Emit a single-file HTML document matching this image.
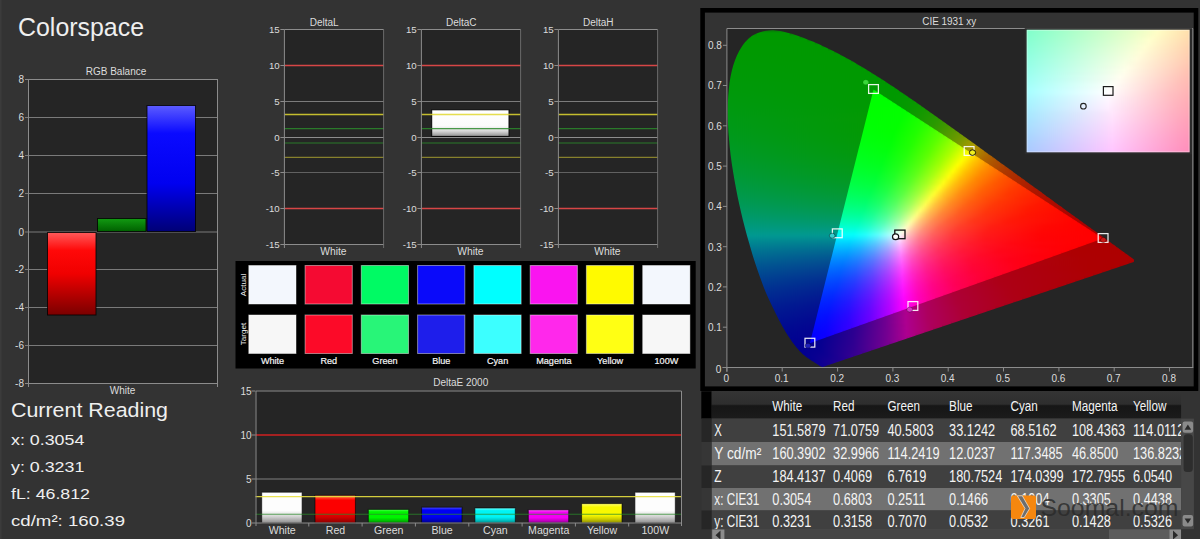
<!DOCTYPE html>
<html><head><meta charset="utf-8"><title>Colorspace</title>
<style>html,body{margin:0;padding:0;background:#333;overflow:hidden}svg{display:block;font-family:"Liberation Sans",sans-serif}</style>
</head><body>
<svg width="1200" height="539" viewBox="0 0 1200 539">
<defs><linearGradient id="g1" x1="0" y1="0" x2="0" y2="1"><stop offset="0" stop-color="#ff5a5a"/><stop offset="0.22" stop-color="#ff0808"/><stop offset="0.5" stop-color="#f00000"/><stop offset="1" stop-color="#7a0000"/></linearGradient><linearGradient id="g2" x1="0" y1="0" x2="0" y2="1"><stop offset="0" stop-color="#129a12"/><stop offset="1" stop-color="#006000"/></linearGradient><linearGradient id="g3" x1="0" y1="0" x2="0" y2="1"><stop offset="0" stop-color="#5c5cff"/><stop offset="0.22" stop-color="#0a0aff"/><stop offset="0.62" stop-color="#0000f0"/><stop offset="1" stop-color="#000076"/></linearGradient><linearGradient id="g4" x1="0" y1="0" x2="0" y2="1"><stop offset="0" stop-color="#ffffff"/><stop offset="0.6" stop-color="#fbfbfb"/><stop offset="0.8" stop-color="#d8d8d8"/><stop offset="1" stop-color="#909090"/></linearGradient><linearGradient id="g5" x1="0" y1="0" x2="0" y2="1"><stop offset="0" stop-color="#ffffff"/><stop offset="0.18" stop-color="#fdfdfd"/><stop offset="0.6" stop-color="#fdfdfd"/><stop offset="0.8" stop-color="#d0d0d0"/><stop offset="1" stop-color="#8c8c8c"/></linearGradient><linearGradient id="g6" x1="0" y1="0" x2="0" y2="1"><stop offset="0" stop-color="#ff7a4a"/><stop offset="0.18" stop-color="#fc0000"/><stop offset="0.6" stop-color="#fc0000"/><stop offset="0.8" stop-color="#d00000"/><stop offset="1" stop-color="#8a0000"/></linearGradient><linearGradient id="g7" x1="0" y1="0" x2="0" y2="1"><stop offset="0" stop-color="#50ff50"/><stop offset="0.18" stop-color="#00f400"/><stop offset="0.6" stop-color="#00f400"/><stop offset="0.8" stop-color="#00c800"/><stop offset="1" stop-color="#008400"/></linearGradient><linearGradient id="g8" x1="0" y1="0" x2="0" y2="1"><stop offset="0" stop-color="#5050ff"/><stop offset="0.18" stop-color="#0000f4"/><stop offset="0.6" stop-color="#0000f4"/><stop offset="0.8" stop-color="#0000c8"/><stop offset="1" stop-color="#000088"/></linearGradient><linearGradient id="g9" x1="0" y1="0" x2="0" y2="1"><stop offset="0" stop-color="#70ffff"/><stop offset="0.18" stop-color="#00f4f4"/><stop offset="0.6" stop-color="#00f4f4"/><stop offset="0.8" stop-color="#00c8c8"/><stop offset="1" stop-color="#008888"/></linearGradient><linearGradient id="g10" x1="0" y1="0" x2="0" y2="1"><stop offset="0" stop-color="#ff70ff"/><stop offset="0.18" stop-color="#f400f4"/><stop offset="0.6" stop-color="#f400f4"/><stop offset="0.8" stop-color="#c800c8"/><stop offset="1" stop-color="#880088"/></linearGradient><linearGradient id="g11" x1="0" y1="0" x2="0" y2="1"><stop offset="0" stop-color="#ffff70"/><stop offset="0.18" stop-color="#f8f800"/><stop offset="0.6" stop-color="#f8f800"/><stop offset="0.8" stop-color="#cccc00"/><stop offset="1" stop-color="#8a8a00"/></linearGradient><linearGradient id="g12" x1="0" y1="0" x2="0" y2="1"><stop offset="0" stop-color="#ffffff"/><stop offset="0.18" stop-color="#fdfdfd"/><stop offset="0.6" stop-color="#fdfdfd"/><stop offset="0.8" stop-color="#d0d0d0"/><stop offset="1" stop-color="#8c8c8c"/></linearGradient><filter id="vb" x="-2%" y="-2%" width="104%" height="104%" color-interpolation-filters="sRGB"><feGaussianBlur stdDeviation="0 1.5"/></filter><clipPath id="hs"><polygon points="823.6,366.7 823.1,366.8 823.0,366.8 823.1,366.8 823.2,366.8 823.3,366.8 823.5,366.8 823.6,366.7 823.6,366.7 823.6,366.7 823.6,366.7 823.5,366.7 823.4,366.8 823.2,366.8 823.0,366.8 822.9,366.8 822.9,366.8 823.0,366.8 823.1,366.8 823.2,366.8 823.2,366.8 823.2,366.8 823.2,366.8 823.2,366.8 823.1,366.8 822.9,366.9 822.8,366.9 822.7,366.9 822.7,366.9 822.6,366.9 822.6,366.9 822.6,366.9 822.6,366.9 822.6,366.9 822.5,366.9 822.5,366.9 822.5,366.9 822.4,366.9 822.4,366.9 822.4,366.9 822.4,366.9 822.3,366.9 822.2,366.9 822.0,366.9 821.9,366.8 821.7,366.8 821.6,366.8 821.5,366.8 821.4,366.7 821.3,366.7 821.2,366.6 821.1,366.6 821.0,366.6 820.9,366.5 820.8,366.4 820.7,366.4 820.5,366.3 820.4,366.3 820.3,366.2 820.2,366.1 820.0,366.0 819.9,366.0 819.7,365.9 819.6,365.8 819.4,365.7 819.2,365.6 819.1,365.5 818.9,365.3 818.7,365.2 818.4,365.1 818.2,364.9 818.0,364.8 817.8,364.6 817.6,364.5 817.3,364.3 817.1,364.2 816.8,364.0 816.6,363.8 816.3,363.6 816.0,363.5 815.7,363.3 815.4,363.0 815.0,362.8 814.6,362.6 814.2,362.4 813.8,362.1 813.4,361.8 813.0,361.5 812.5,361.3 812.1,361.0 811.6,360.7 811.1,360.3 810.6,360.0 810.0,359.6 809.4,359.2 808.9,358.8 808.3,358.4 807.6,358.0 807.0,357.5 806.3,357.0 805.6,356.4 804.9,355.9 804.2,355.3 803.4,354.7 802.6,354.0 801.8,353.2 800.9,352.3 800.0,351.4 799.1,350.4 798.1,349.3 797.0,348.1 795.9,346.8 794.8,345.3 793.6,343.8 792.4,342.2 791.2,340.4 789.9,338.6 788.5,336.5 787.1,334.3 785.6,331.9 784.1,329.3 782.5,326.5 780.9,323.6 779.2,320.5 777.5,317.1 775.7,313.5 773.8,309.6 771.8,305.6 769.8,301.3 767.7,296.7 765.6,291.9 763.5,286.7 761.5,281.3 759.4,275.6 757.3,269.6 755.2,263.3 753.1,256.8 751.1,250.1 749.1,243.1 747.0,235.8 745.0,228.2 743.0,220.4 741.1,212.5 739.3,204.6 737.6,196.7 736.0,188.6 734.5,180.3 733.1,172.1 731.8,163.8 730.7,155.7 729.8,147.8 729.1,140.0 728.4,132.2 728.0,124.5 727.7,117.0 727.6,109.7 727.8,102.7 728.2,95.9 728.8,89.3 729.5,82.8 730.5,76.7 731.8,70.8 733.2,65.4 734.9,60.4 736.8,55.7 739.0,51.3 741.4,47.2 743.9,43.6 746.6,40.5 749.4,37.7 752.5,35.5 755.7,33.7 759.1,32.4 762.5,31.4 765.9,30.7 769.4,30.2 773.0,30.1 776.6,30.5 780.3,31.0 783.9,31.8 787.5,32.7 791.2,33.6 794.8,34.7 798.5,35.9 802.1,37.3 805.8,38.7 809.4,40.2 812.9,41.6 816.4,43.1 819.8,44.6 823.2,46.2 826.6,47.8 830.0,49.4 833.3,51.1 836.7,52.7 840.0,54.5 843.2,56.2 846.5,58.0 849.7,59.8 853.0,61.6 856.2,63.5 859.4,65.4 862.7,67.3 865.9,69.2 869.1,71.2 872.3,73.2 875.5,75.2 878.7,77.2 881.9,79.3 885.1,81.3 888.2,83.4 891.4,85.5 894.6,87.6 897.8,89.8 900.9,91.9 904.1,94.0 907.3,96.2 910.5,98.4 913.6,100.6 916.8,102.8 920.0,105.0 923.2,107.2 926.3,109.4 929.5,111.7 932.7,113.9 935.9,116.2 939.0,118.4 942.2,120.7 945.4,122.9 948.5,125.2 951.7,127.4 954.8,129.7 958.0,131.9 961.1,134.2 964.3,136.5 967.4,138.7 970.6,141.0 973.7,143.2 976.8,145.5 979.9,147.7 983.0,149.9 986.0,152.2 989.1,154.4 992.2,156.6 995.2,158.8 998.2,161.0 1001.2,163.2 1004.2,165.3 1007.2,167.5 1010.1,169.6 1013.1,171.8 1016.0,173.9 1018.9,176.0 1021.7,178.1 1024.6,180.1 1027.4,182.2 1030.2,184.2 1033.0,186.2 1035.7,188.2 1038.4,190.1 1041.1,192.1 1043.7,194.0 1046.3,195.9 1048.9,197.7 1051.4,199.6 1053.9,201.4 1056.3,203.2 1058.7,204.9 1061.1,206.6 1063.3,208.3 1065.6,209.9 1067.7,211.4 1069.8,213.0 1071.9,214.5 1074.0,215.9 1076.0,217.4 1077.9,218.8 1079.9,220.2 1081.7,221.6 1083.6,222.9 1085.4,224.2 1087.1,225.5 1088.8,226.7 1090.4,227.8 1091.9,228.9 1093.5,230.0 1094.9,231.1 1096.4,232.1 1097.7,233.1 1099.1,234.1 1100.4,235.0 1101.6,235.9 1102.8,236.8 1103.9,237.7 1105.1,238.5 1106.1,239.3 1107.2,240.0 1108.2,240.7 1109.1,241.4 1110.0,242.1 1110.9,242.7 1111.8,243.4 1112.6,244.0 1113.4,244.5 1114.2,245.1 1114.9,245.6 1115.7,246.2 1116.4,246.7 1117.0,247.2 1117.7,247.6 1118.3,248.1 1118.9,248.5 1119.5,249.0 1120.1,249.4 1120.7,249.8 1121.2,250.2 1121.7,250.6 1122.2,250.9 1122.7,251.3 1123.2,251.7 1123.7,252.0 1124.1,252.3 1124.6,252.6 1125.0,253.0 1125.4,253.2 1125.8,253.5 1126.2,253.8 1126.5,254.1 1126.9,254.3 1127.2,254.5 1127.6,254.8 1127.9,255.0 1128.2,255.2 1128.4,255.4 1128.7,255.6 1129.0,255.8 1129.2,256.0 1129.4,256.1 1129.7,256.3 1129.9,256.5 1130.1,256.6 1130.3,256.8 1130.5,256.9 1130.7,257.0 1130.8,257.1 1131.0,257.3 1131.1,257.4 1131.3,257.5 1131.4,257.6 1131.6,257.7 1131.7,257.8 1131.8,257.8 1131.9,257.9 1132.0,258.0 1132.1,258.0 1132.2,258.1 1132.2,258.2 1132.3,258.2 1132.4,258.3 1132.5,258.4 1132.6,258.4 1132.6,258.5 1132.7,258.5 1132.8,258.6 1132.8,258.6 1132.9,258.7 1133.0,258.7 1133.0,258.7 1133.1,258.8 1133.1,258.8 1133.2,258.9 1133.3,258.9 1133.3,259.0 1133.4,259.0 1133.5,259.1 1133.5,259.1 1133.6,259.1 1133.6,259.2 1133.7,259.2 1133.7,259.3 1133.8,259.3 1133.8,259.3 1133.9,259.4 1133.9,259.4 1133.9,259.4 1134.0,259.4 1134.0,259.5 1134.0,259.5 1134.0,259.5 1134.1,259.5 1134.1,259.5 1134.1,259.5 1134.1,259.5 1134.1,259.5 1134.1,259.6 1134.1,259.6 1134.2,259.6 1134.2,259.6 1134.2,259.6 1133.8,261.9"/></clipPath><clipPath id="tr"><polygon points="1103.1,238.6 873.5,89.6 809.9,343.3"/></clipPath><linearGradient id="a0" gradientUnits="userSpaceOnUse" x1="756.5" x2="789.6" y1="0" y2="0"><stop offset="0.000" stop-color="#009900"/><stop offset="1.000" stop-color="#009900"/></linearGradient><linearGradient id="a1" gradientUnits="userSpaceOnUse" x1="750.8" x2="799.7" y1="0" y2="0"><stop offset="0.000" stop-color="#009900"/><stop offset="1.000" stop-color="#009900"/></linearGradient><linearGradient id="a2" gradientUnits="userSpaceOnUse" x1="747.1" x2="807.5" y1="0" y2="0"><stop offset="0.000" stop-color="#009900"/><stop offset="1.000" stop-color="#009900"/></linearGradient><linearGradient id="a3" gradientUnits="userSpaceOnUse" x1="744.3" x2="814.7" y1="0" y2="0"><stop offset="0.000" stop-color="#009900"/><stop offset="1.000" stop-color="#009900"/></linearGradient><linearGradient id="a4" gradientUnits="userSpaceOnUse" x1="742.0" x2="821.6" y1="0" y2="0"><stop offset="0.000" stop-color="#009900"/><stop offset="1.000" stop-color="#009900"/></linearGradient><linearGradient id="a5" gradientUnits="userSpaceOnUse" x1="739.9" x2="828.1" y1="0" y2="0"><stop offset="0.000" stop-color="#009901"/><stop offset="1.000" stop-color="#009900"/></linearGradient><linearGradient id="a6" gradientUnits="userSpaceOnUse" x1="738.2" x2="834.2" y1="0" y2="0"><stop offset="0.000" stop-color="#009901"/><stop offset="1.000" stop-color="#009900"/></linearGradient><linearGradient id="a7" gradientUnits="userSpaceOnUse" x1="736.7" x2="840.1" y1="0" y2="0"><stop offset="0.000" stop-color="#009901"/><stop offset="1.000" stop-color="#009900"/></linearGradient><linearGradient id="a8" gradientUnits="userSpaceOnUse" x1="735.3" x2="845.7" y1="0" y2="0"><stop offset="0.000" stop-color="#009902"/><stop offset="1.000" stop-color="#009900"/></linearGradient><linearGradient id="a9" gradientUnits="userSpaceOnUse" x1="734.0" x2="851.1" y1="0" y2="0"><stop offset="0.000" stop-color="#009902"/><stop offset="1.000" stop-color="#009900"/></linearGradient><linearGradient id="a10" gradientUnits="userSpaceOnUse" x1="733.0" x2="856.4" y1="0" y2="0"><stop offset="0.000" stop-color="#009903"/><stop offset="1.000" stop-color="#009900"/></linearGradient><linearGradient id="a11" gradientUnits="userSpaceOnUse" x1="732.0" x2="861.5" y1="0" y2="0"><stop offset="0.000" stop-color="#009904"/><stop offset="1.000" stop-color="#009900"/></linearGradient><linearGradient id="a12" gradientUnits="userSpaceOnUse" x1="731.3" x2="866.5" y1="0" y2="0"><stop offset="0.000" stop-color="#009904"/><stop offset="1.000" stop-color="#009900"/></linearGradient><linearGradient id="a13" gradientUnits="userSpaceOnUse" x1="730.5" x2="871.4" y1="0" y2="0"><stop offset="0.000" stop-color="#009905"/><stop offset="1.000" stop-color="#009900"/></linearGradient><linearGradient id="a14" gradientUnits="userSpaceOnUse" x1="729.9" x2="876.2" y1="0" y2="0"><stop offset="0.000" stop-color="#009906"/><stop offset="1.000" stop-color="#009900"/></linearGradient><linearGradient id="a15" gradientUnits="userSpaceOnUse" x1="729.3" x2="880.9" y1="0" y2="0"><stop offset="0.000" stop-color="#009906"/><stop offset="1.000" stop-color="#009900"/></linearGradient><linearGradient id="a16" gradientUnits="userSpaceOnUse" x1="728.8" x2="885.6" y1="0" y2="0"><stop offset="0.000" stop-color="#009907"/><stop offset="1.000" stop-color="#009900"/></linearGradient><linearGradient id="a17" gradientUnits="userSpaceOnUse" x1="728.4" x2="890.1" y1="0" y2="0"><stop offset="0.000" stop-color="#009908"/><stop offset="1.000" stop-color="#009900"/></linearGradient><linearGradient id="a18" gradientUnits="userSpaceOnUse" x1="728.0" x2="894.7" y1="0" y2="0"><stop offset="0.000" stop-color="#009909"/><stop offset="1.000" stop-color="#009900"/></linearGradient><linearGradient id="a19" gradientUnits="userSpaceOnUse" x1="727.7" x2="899.1" y1="0" y2="0"><stop offset="0.000" stop-color="#009909"/><stop offset="0.965" stop-color="#009900"/><stop offset="1.000" stop-color="#009900"/></linearGradient><linearGradient id="a20" gradientUnits="userSpaceOnUse" x1="727.4" x2="903.6" y1="0" y2="0"><stop offset="0.000" stop-color="#00990a"/><stop offset="0.932" stop-color="#009900"/><stop offset="1.000" stop-color="#009900"/></linearGradient><linearGradient id="a21" gradientUnits="userSpaceOnUse" x1="727.2" x2="908.0" y1="0" y2="0"><stop offset="0.000" stop-color="#00990b"/><stop offset="0.911" stop-color="#009900"/><stop offset="1.000" stop-color="#019900"/></linearGradient><linearGradient id="a22" gradientUnits="userSpaceOnUse" x1="727.0" x2="912.3" y1="0" y2="0"><stop offset="0.000" stop-color="#00990c"/><stop offset="0.891" stop-color="#009900"/><stop offset="1.000" stop-color="#049900"/></linearGradient><linearGradient id="a23" gradientUnits="userSpaceOnUse" x1="726.8" x2="916.7" y1="0" y2="0"><stop offset="0.000" stop-color="#00990d"/><stop offset="0.883" stop-color="#009900"/><stop offset="1.000" stop-color="#089900"/></linearGradient><linearGradient id="a24" gradientUnits="userSpaceOnUse" x1="726.7" x2="921.0" y1="0" y2="0"><stop offset="0.000" stop-color="#00990e"/><stop offset="0.876" stop-color="#009900"/><stop offset="1.000" stop-color="#0c9900"/></linearGradient><linearGradient id="a25" gradientUnits="userSpaceOnUse" x1="726.7" x2="925.3" y1="0" y2="0"><stop offset="0.000" stop-color="#00990f"/><stop offset="0.869" stop-color="#009900"/><stop offset="1.000" stop-color="#129900"/></linearGradient><linearGradient id="a26" gradientUnits="userSpaceOnUse" x1="726.6" x2="929.6" y1="0" y2="0"><stop offset="0.000" stop-color="#009910"/><stop offset="0.861" stop-color="#019900"/><stop offset="1.000" stop-color="#189900"/></linearGradient><linearGradient id="a27" gradientUnits="userSpaceOnUse" x1="726.6" x2="933.8" y1="0" y2="0"><stop offset="0.000" stop-color="#009911"/><stop offset="0.854" stop-color="#029900"/><stop offset="1.000" stop-color="#209900"/></linearGradient><linearGradient id="a28" gradientUnits="userSpaceOnUse" x1="726.7" x2="938.1" y1="0" y2="0"><stop offset="0.000" stop-color="#009912"/><stop offset="0.838" stop-color="#039900"/><stop offset="1.000" stop-color="#289900"/></linearGradient><linearGradient id="a29" gradientUnits="userSpaceOnUse" x1="726.7" x2="942.3" y1="0" y2="0"><stop offset="0.000" stop-color="#009914"/><stop offset="0.822" stop-color="#049900"/><stop offset="0.981" stop-color="#2b9900"/><stop offset="1.000" stop-color="#319900"/></linearGradient><linearGradient id="a30" gradientUnits="userSpaceOnUse" x1="726.8" x2="946.5" y1="0" y2="0"><stop offset="0.000" stop-color="#009915"/><stop offset="0.798" stop-color="#049900"/><stop offset="0.954" stop-color="#2a9900"/><stop offset="1.000" stop-color="#3b9900"/></linearGradient><linearGradient id="a31" gradientUnits="userSpaceOnUse" x1="726.9" x2="950.7" y1="0" y2="0"><stop offset="0.000" stop-color="#009916"/><stop offset="0.775" stop-color="#039900"/><stop offset="0.928" stop-color="#2a9900"/><stop offset="1.000" stop-color="#479900"/></linearGradient><linearGradient id="a32" gradientUnits="userSpaceOnUse" x1="727.1" x2="954.9" y1="0" y2="0"><stop offset="0.000" stop-color="#009917"/><stop offset="0.752" stop-color="#039900"/><stop offset="0.894" stop-color="#279900"/><stop offset="1.000" stop-color="#539900"/></linearGradient><linearGradient id="a33" gradientUnits="userSpaceOnUse" x1="727.2" x2="959.0" y1="0" y2="0"><stop offset="0.000" stop-color="#009919"/><stop offset="0.739" stop-color="#049900"/><stop offset="0.878" stop-color="#2a9900"/><stop offset="1.000" stop-color="#619900"/></linearGradient><linearGradient id="a34" gradientUnits="userSpaceOnUse" x1="727.4" x2="963.2" y1="0" y2="0"><stop offset="0.000" stop-color="#00991a"/><stop offset="0.718" stop-color="#039901"/><stop offset="0.855" stop-color="#2a9900"/><stop offset="0.991" stop-color="#6c9900"/><stop offset="1.000" stop-color="#719900"/></linearGradient><linearGradient id="a35" gradientUnits="userSpaceOnUse" x1="727.7" x2="967.4" y1="0" y2="0"><stop offset="0.000" stop-color="#00991c"/><stop offset="0.697" stop-color="#039902"/><stop offset="0.832" stop-color="#299900"/><stop offset="0.966" stop-color="#6c9900"/><stop offset="1.000" stop-color="#829900"/></linearGradient><linearGradient id="a36" gradientUnits="userSpaceOnUse" x1="727.9" x2="971.6" y1="0" y2="0"><stop offset="0.000" stop-color="#00991d"/><stop offset="0.686" stop-color="#049902"/><stop offset="0.818" stop-color="#2c9900"/><stop offset="0.950" stop-color="#729900"/><stop offset="1.000" stop-color="#959900"/></linearGradient><linearGradient id="a37" gradientUnits="userSpaceOnUse" x1="728.2" x2="975.7" y1="0" y2="0"><stop offset="0.000" stop-color="#00991f"/><stop offset="0.667" stop-color="#039903"/><stop offset="0.789" stop-color="#299900"/><stop offset="0.911" stop-color="#699900"/><stop offset="1.000" stop-color="#aa9900"/></linearGradient><linearGradient id="a38" gradientUnits="userSpaceOnUse" x1="728.5" x2="979.9" y1="0" y2="0"><stop offset="0.000" stop-color="#009921"/><stop offset="0.648" stop-color="#039905"/><stop offset="0.768" stop-color="#289900"/><stop offset="0.888" stop-color="#699900"/><stop offset="0.976" stop-color="#ac9900"/><stop offset="1.000" stop-color="#ad8900"/></linearGradient><linearGradient id="a39" gradientUnits="userSpaceOnUse" x1="728.7" x2="984.0" y1="0" y2="0"><stop offset="0.000" stop-color="#009923"/><stop offset="0.630" stop-color="#039906"/><stop offset="0.748" stop-color="#289901"/><stop offset="0.866" stop-color="#6a9900"/><stop offset="0.953" stop-color="#ad9800"/><stop offset="1.000" stop-color="#ad7900"/></linearGradient><linearGradient id="a40" gradientUnits="userSpaceOnUse" x1="729.1" x2="988.2" y1="0" y2="0"><stop offset="0.000" stop-color="#009924"/><stop offset="0.620" stop-color="#049907"/><stop offset="0.736" stop-color="#2c9902"/><stop offset="0.853" stop-color="#719900"/><stop offset="0.930" stop-color="#ad9600"/><stop offset="1.000" stop-color="#ad6b00"/></linearGradient><linearGradient id="a41" gradientUnits="userSpaceOnUse" x1="729.4" x2="992.3" y1="0" y2="0"><stop offset="0.000" stop-color="#009926"/><stop offset="0.603" stop-color="#039909"/><stop offset="0.710" stop-color="#289904"/><stop offset="0.824" stop-color="#6c9900"/><stop offset="0.901" stop-color="#ab9900"/><stop offset="0.992" stop-color="#ad6200"/><stop offset="1.000" stop-color="#ad5e00"/></linearGradient><linearGradient id="a42" gradientUnits="userSpaceOnUse" x1="729.8" x2="996.5" y1="0" y2="0"><stop offset="0.000" stop-color="#009928"/><stop offset="0.586" stop-color="#03990b"/><stop offset="0.692" stop-color="#289905"/><stop offset="0.797" stop-color="#679900"/><stop offset="0.880" stop-color="#ad9900"/><stop offset="0.955" stop-color="#ad6700"/><stop offset="1.000" stop-color="#ad5400"/></linearGradient><linearGradient id="a43" gradientUnits="userSpaceOnUse" x1="730.2" x2="1000.6" y1="0" y2="0"><stop offset="0.000" stop-color="#00992a"/><stop offset="0.578" stop-color="#04990d"/><stop offset="0.681" stop-color="#2b9907"/><stop offset="0.785" stop-color="#6e9901"/><stop offset="0.859" stop-color="#ad9700"/><stop offset="0.933" stop-color="#ad6500"/><stop offset="1.000" stop-color="#ad4a00"/></linearGradient><linearGradient id="a44" gradientUnits="userSpaceOnUse" x1="730.6" x2="1004.7" y1="0" y2="0"><stop offset="0.000" stop-color="#00992d"/><stop offset="0.562" stop-color="#04990f"/><stop offset="0.664" stop-color="#2b9909"/><stop offset="0.766" stop-color="#6f9903"/><stop offset="0.832" stop-color="#ab9900"/><stop offset="0.920" stop-color="#ad6000"/><stop offset="1.000" stop-color="#ad4100"/></linearGradient><linearGradient id="a45" gradientUnits="userSpaceOnUse" x1="731.0" x2="1008.9" y1="0" y2="0"><stop offset="0.000" stop-color="#00992f"/><stop offset="0.543" stop-color="#029912"/><stop offset="0.638" stop-color="#26990b"/><stop offset="0.739" stop-color="#699905"/><stop offset="0.812" stop-color="#ac9901"/><stop offset="0.891" stop-color="#ad6200"/><stop offset="1.000" stop-color="#ad3a00"/></linearGradient><linearGradient id="a46" gradientUnits="userSpaceOnUse" x1="731.5" x2="1013.0" y1="0" y2="0"><stop offset="0.000" stop-color="#009931"/><stop offset="0.536" stop-color="#049914"/><stop offset="0.629" stop-color="#29990d"/><stop offset="0.721" stop-color="#6a9907"/><stop offset="0.793" stop-color="#ad9802"/><stop offset="0.864" stop-color="#ad6400"/><stop offset="0.971" stop-color="#ad3a00"/><stop offset="1.000" stop-color="#ad3300"/></linearGradient><linearGradient id="a47" gradientUnits="userSpaceOnUse" x1="731.9" x2="1017.1" y1="0" y2="0"><stop offset="0.000" stop-color="#009934"/><stop offset="0.521" stop-color="#039916"/><stop offset="0.613" stop-color="#299910"/><stop offset="0.704" stop-color="#6b9909"/><stop offset="0.775" stop-color="#ad9504"/><stop offset="0.845" stop-color="#ad6200"/><stop offset="0.951" stop-color="#ad3900"/><stop offset="1.000" stop-color="#ad2d00"/></linearGradient><linearGradient id="a48" gradientUnits="userSpaceOnUse" x1="732.4" x2="1021.3" y1="0" y2="0"><stop offset="0.000" stop-color="#009936"/><stop offset="0.507" stop-color="#039919"/><stop offset="0.597" stop-color="#299912"/><stop offset="0.688" stop-color="#6c990b"/><stop offset="0.750" stop-color="#ac9906"/><stop offset="0.819" stop-color="#ad6401"/><stop offset="0.924" stop-color="#ad3a00"/><stop offset="1.000" stop-color="#ad2800"/></linearGradient><linearGradient id="a49" gradientUnits="userSpaceOnUse" x1="732.9" x2="1025.4" y1="0" y2="0"><stop offset="0.000" stop-color="#009939"/><stop offset="0.493" stop-color="#02991c"/><stop offset="0.575" stop-color="#259916"/><stop offset="0.664" stop-color="#67990f"/><stop offset="0.733" stop-color="#ad9709"/><stop offset="0.795" stop-color="#ad6603"/><stop offset="0.890" stop-color="#ad3c00"/><stop offset="1.000" stop-color="#ad2300"/></linearGradient><linearGradient id="a50" gradientUnits="userSpaceOnUse" x1="733.5" x2="1029.5" y1="0" y2="0"><stop offset="0.000" stop-color="#00993c"/><stop offset="0.486" stop-color="#04991f"/><stop offset="0.568" stop-color="#299919"/><stop offset="0.649" stop-color="#689912"/><stop offset="0.716" stop-color="#ad950b"/><stop offset="0.777" stop-color="#ad6404"/><stop offset="0.872" stop-color="#ad3a00"/><stop offset="1.000" stop-color="#ad1f00"/></linearGradient><linearGradient id="a51" gradientUnits="userSpaceOnUse" x1="734.0" x2="1033.7" y1="0" y2="0"><stop offset="0.000" stop-color="#00993f"/><stop offset="0.470" stop-color="#039923"/><stop offset="0.550" stop-color="#27991c"/><stop offset="0.631" stop-color="#679915"/><stop offset="0.691" stop-color="#aa990f"/><stop offset="0.758" stop-color="#ad6306"/><stop offset="0.852" stop-color="#ad3900"/><stop offset="1.000" stop-color="#ad1b00"/></linearGradient><linearGradient id="a52" gradientUnits="userSpaceOnUse" x1="734.6" x2="1037.8" y1="0" y2="0"><stop offset="0.000" stop-color="#009942"/><stop offset="0.457" stop-color="#029927"/><stop offset="0.536" stop-color="#279920"/><stop offset="0.616" stop-color="#689919"/><stop offset="0.675" stop-color="#ad9913"/><stop offset="0.735" stop-color="#ad6408"/><stop offset="0.828" stop-color="#ad3a01"/><stop offset="0.987" stop-color="#ad1900"/><stop offset="1.000" stop-color="#ad1700"/></linearGradient><linearGradient id="a53" gradientUnits="userSpaceOnUse" x1="735.1" x2="1042.0" y1="0" y2="0"><stop offset="0.000" stop-color="#009945"/><stop offset="0.451" stop-color="#04992a"/><stop offset="0.529" stop-color="#2c9923"/><stop offset="0.608" stop-color="#71991c"/><stop offset="0.660" stop-color="#ad9616"/><stop offset="0.719" stop-color="#ad620a"/><stop offset="0.810" stop-color="#ad3802"/><stop offset="0.967" stop-color="#ad1800"/><stop offset="1.000" stop-color="#ad1400"/></linearGradient><linearGradient id="a54" gradientUnits="userSpaceOnUse" x1="735.7" x2="1046.1" y1="0" y2="0"><stop offset="0.000" stop-color="#009949"/><stop offset="0.439" stop-color="#03992e"/><stop offset="0.510" stop-color="#279928"/><stop offset="0.581" stop-color="#659922"/><stop offset="0.639" stop-color="#ac991c"/><stop offset="0.697" stop-color="#ad640e"/><stop offset="0.781" stop-color="#ad3a04"/><stop offset="0.929" stop-color="#ad1900"/><stop offset="1.000" stop-color="#ad1100"/></linearGradient><linearGradient id="a55" gradientUnits="userSpaceOnUse" x1="736.3" x2="1050.3" y1="0" y2="0"><stop offset="0.000" stop-color="#00994c"/><stop offset="0.429" stop-color="#049933"/><stop offset="0.500" stop-color="#2a992d"/><stop offset="0.571" stop-color="#6a9926"/><stop offset="0.622" stop-color="#ac9920"/><stop offset="0.679" stop-color="#ad6311"/><stop offset="0.763" stop-color="#ad3906"/><stop offset="0.904" stop-color="#ad1900"/><stop offset="1.000" stop-color="#ad0f00"/></linearGradient><linearGradient id="a56" gradientUnits="userSpaceOnUse" x1="736.9" x2="1054.4" y1="0" y2="0"><stop offset="0.000" stop-color="#009950"/><stop offset="0.418" stop-color="#039937"/><stop offset="0.487" stop-color="#2a9932"/><stop offset="0.557" stop-color="#6c992b"/><stop offset="0.608" stop-color="#ad9725"/><stop offset="0.658" stop-color="#ad6515"/><stop offset="0.734" stop-color="#ad3c08"/><stop offset="0.867" stop-color="#ad1b00"/><stop offset="1.000" stop-color="#ad0c00"/></linearGradient><linearGradient id="a57" gradientUnits="userSpaceOnUse" x1="737.5" x2="1058.5" y1="0" y2="0"><stop offset="0.000" stop-color="#009954"/><stop offset="0.406" stop-color="#03993d"/><stop offset="0.475" stop-color="#2a9937"/><stop offset="0.544" stop-color="#6e9930"/><stop offset="0.587" stop-color="#aa992b"/><stop offset="0.650" stop-color="#ad5e16"/><stop offset="0.731" stop-color="#ad3609"/><stop offset="0.875" stop-color="#ad1600"/><stop offset="1.000" stop-color="#ad0a00"/></linearGradient><linearGradient id="a58" gradientUnits="userSpaceOnUse" x1="738.2" x2="1062.6" y1="0" y2="0"><stop offset="0.000" stop-color="#009958"/><stop offset="0.395" stop-color="#039942"/><stop offset="0.457" stop-color="#25993d"/><stop offset="0.525" stop-color="#689937"/><stop offset="0.574" stop-color="#ad9931"/><stop offset="0.623" stop-color="#ad641d"/><stop offset="0.698" stop-color="#ad3b0d"/><stop offset="0.827" stop-color="#ad1a02"/><stop offset="1.000" stop-color="#ad0800"/></linearGradient><linearGradient id="a59" gradientUnits="userSpaceOnUse" x1="738.8" x2="1066.7" y1="0" y2="0"><stop offset="0.000" stop-color="#00995d"/><stop offset="0.387" stop-color="#039948"/><stop offset="0.448" stop-color="#289943"/><stop offset="0.509" stop-color="#66993d"/><stop offset="0.558" stop-color="#ad9938"/><stop offset="0.601" stop-color="#ad6923"/><stop offset="0.669" stop-color="#ad3f11"/><stop offset="0.785" stop-color="#ad1d04"/><stop offset="1.000" stop-color="#ad0700"/></linearGradient><linearGradient id="a60" gradientUnits="userSpaceOnUse" x1="739.5" x2="1070.9" y1="0" y2="0"><stop offset="0.000" stop-color="#009961"/><stop offset="0.376" stop-color="#03994e"/><stop offset="0.436" stop-color="#289949"/><stop offset="0.497" stop-color="#699944"/><stop offset="0.545" stop-color="#ad953e"/><stop offset="0.588" stop-color="#ad6627"/><stop offset="0.655" stop-color="#ad3c14"/><stop offset="0.770" stop-color="#ad1b05"/><stop offset="1.000" stop-color="#ad0500"/></linearGradient><linearGradient id="a61" gradientUnits="userSpaceOnUse" x1="740.2" x2="1075.0" y1="0" y2="0"><stop offset="0.000" stop-color="#009966"/><stop offset="0.365" stop-color="#039955"/><stop offset="0.425" stop-color="#289950"/><stop offset="0.485" stop-color="#6b994b"/><stop offset="0.527" stop-color="#ac9947"/><stop offset="0.575" stop-color="#ad632b"/><stop offset="0.641" stop-color="#ad3a16"/><stop offset="0.754" stop-color="#ad1a07"/><stop offset="0.988" stop-color="#ad0400"/><stop offset="1.000" stop-color="#ad0400"/></linearGradient><linearGradient id="a62" gradientUnits="userSpaceOnUse" x1="740.9" x2="1079.2" y1="0" y2="0"><stop offset="0.000" stop-color="#00996b"/><stop offset="0.355" stop-color="#02995c"/><stop offset="0.408" stop-color="#249958"/><stop offset="0.467" stop-color="#659954"/><stop offset="0.515" stop-color="#ad964e"/><stop offset="0.556" stop-color="#ad6532"/><stop offset="0.621" stop-color="#ad3b1a"/><stop offset="0.734" stop-color="#ad1a08"/><stop offset="0.964" stop-color="#ad0400"/><stop offset="1.000" stop-color="#ad0300"/></linearGradient><linearGradient id="a63" gradientUnits="userSpaceOnUse" x1="741.6" x2="1083.3" y1="0" y2="0"><stop offset="0.000" stop-color="#009971"/><stop offset="0.347" stop-color="#039963"/><stop offset="0.400" stop-color="#269960"/><stop offset="0.453" stop-color="#63995d"/><stop offset="0.500" stop-color="#ad9657"/><stop offset="0.541" stop-color="#ad6437"/><stop offset="0.606" stop-color="#ad391d"/><stop offset="0.718" stop-color="#ad190a"/><stop offset="0.947" stop-color="#ad0400"/><stop offset="1.000" stop-color="#ad0200"/></linearGradient><linearGradient id="a64" gradientUnits="userSpaceOnUse" x1="742.4" x2="1087.4" y1="0" y2="0"><stop offset="0.000" stop-color="#009977"/><stop offset="0.337" stop-color="#02996c"/><stop offset="0.390" stop-color="#269969"/><stop offset="0.442" stop-color="#659966"/><stop offset="0.483" stop-color="#aa9963"/><stop offset="0.529" stop-color="#ad603c"/><stop offset="0.593" stop-color="#ad3720"/><stop offset="0.703" stop-color="#ad170b"/><stop offset="0.936" stop-color="#ad0300"/><stop offset="1.000" stop-color="#ad0100"/></linearGradient><linearGradient id="a65" gradientUnits="userSpaceOnUse" x1="743.2" x2="1091.6" y1="0" y2="0"><stop offset="0.000" stop-color="#00997d"/><stop offset="0.328" stop-color="#029974"/><stop offset="0.379" stop-color="#279972"/><stop offset="0.431" stop-color="#689970"/><stop offset="0.471" stop-color="#ad976c"/><stop offset="0.506" stop-color="#ad6849"/><stop offset="0.563" stop-color="#ad3d29"/><stop offset="0.661" stop-color="#ad1b11"/><stop offset="0.856" stop-color="#ad0501"/><stop offset="1.000" stop-color="#ad0000"/></linearGradient><linearGradient id="a66" gradientUnits="userSpaceOnUse" x1="743.9" x2="1095.8" y1="0" y2="0"><stop offset="0.000" stop-color="#009983"/><stop offset="0.320" stop-color="#03997e"/><stop offset="0.366" stop-color="#24997d"/><stop offset="0.417" stop-color="#66997b"/><stop offset="0.457" stop-color="#ad9778"/><stop offset="0.491" stop-color="#ad6751"/><stop offset="0.549" stop-color="#ad3b2d"/><stop offset="0.646" stop-color="#ad1a13"/><stop offset="0.840" stop-color="#ad0402"/><stop offset="1.000" stop-color="#ad0000"/></linearGradient><linearGradient id="a67" gradientUnits="userSpaceOnUse" x1="744.7" x2="1099.9" y1="0" y2="0"><stop offset="0.000" stop-color="#00998a"/><stop offset="0.311" stop-color="#029988"/><stop offset="0.356" stop-color="#259987"/><stop offset="0.401" stop-color="#609987"/><stop offset="0.441" stop-color="#a99986"/><stop offset="0.480" stop-color="#ad6356"/><stop offset="0.537" stop-color="#ad3931"/><stop offset="0.633" stop-color="#ad1915"/><stop offset="0.831" stop-color="#ad0403"/><stop offset="1.000" stop-color="#ad0000"/></linearGradient><linearGradient id="a68" gradientUnits="userSpaceOnUse" x1="745.5" x2="1104.0" y1="0" y2="0"><stop offset="0.000" stop-color="#009991"/><stop offset="0.302" stop-color="#029791"/><stop offset="0.346" stop-color="#259791"/><stop offset="0.391" stop-color="#619791"/><stop offset="0.430" stop-color="#ac9691"/><stop offset="0.469" stop-color="#ad5f5c"/><stop offset="0.525" stop-color="#ad3635"/><stop offset="0.620" stop-color="#ad1717"/><stop offset="0.821" stop-color="#ad0303"/><stop offset="1.000" stop-color="#ad0000"/></linearGradient><linearGradient id="a69" gradientUnits="userSpaceOnUse" x1="746.4" x2="1108.2" y1="0" y2="0"><stop offset="0.000" stop-color="#009191"/><stop offset="0.294" stop-color="#038c91"/><stop offset="0.339" stop-color="#248b91"/><stop offset="0.389" stop-color="#688a91"/><stop offset="0.422" stop-color="#a78891"/><stop offset="0.433" stop-color="#ad7b83"/><stop offset="0.472" stop-color="#ad4f55"/><stop offset="0.533" stop-color="#ad2b2f"/><stop offset="0.644" stop-color="#ad0f12"/><stop offset="0.889" stop-color="#ad0001"/><stop offset="1.000" stop-color="#ad0000"/></linearGradient><linearGradient id="a70" gradientUnits="userSpaceOnUse" x1="747.2" x2="1112.3" y1="0" y2="0"><stop offset="0.000" stop-color="#008991"/><stop offset="0.286" stop-color="#028291"/><stop offset="0.330" stop-color="#228091"/><stop offset="0.379" stop-color="#627e91"/><stop offset="0.418" stop-color="#a97b91"/><stop offset="0.462" stop-color="#ad4b5a"/><stop offset="0.522" stop-color="#ad2832"/><stop offset="0.632" stop-color="#ad0e14"/><stop offset="0.868" stop-color="#ad0001"/><stop offset="1.000" stop-color="#ad0000"/></linearGradient><linearGradient id="a71" gradientUnits="userSpaceOnUse" x1="748.0" x2="1116.5" y1="0" y2="0"><stop offset="0.000" stop-color="#008291"/><stop offset="0.277" stop-color="#027891"/><stop offset="0.326" stop-color="#267591"/><stop offset="0.375" stop-color="#657291"/><stop offset="0.413" stop-color="#ac6f91"/><stop offset="0.451" stop-color="#ad4760"/><stop offset="0.511" stop-color="#ad2636"/><stop offset="0.614" stop-color="#ad0e17"/><stop offset="0.832" stop-color="#ad0003"/><stop offset="1.000" stop-color="#ad0000"/></linearGradient><linearGradient id="a72" gradientUnits="userSpaceOnUse" x1="748.9" x2="1120.6" y1="0" y2="0"><stop offset="0.000" stop-color="#007b91"/><stop offset="0.270" stop-color="#026f91"/><stop offset="0.319" stop-color="#256c91"/><stop offset="0.368" stop-color="#636891"/><stop offset="0.411" stop-color="#ad618d"/><stop offset="0.449" stop-color="#ad3e5d"/><stop offset="0.508" stop-color="#ad2135"/><stop offset="0.616" stop-color="#ad0b16"/><stop offset="0.843" stop-color="#ad0002"/><stop offset="1.000" stop-color="#ad0000"/></linearGradient><linearGradient id="a73" gradientUnits="userSpaceOnUse" x1="749.8" x2="1124.7" y1="0" y2="0"><stop offset="0.000" stop-color="#007491"/><stop offset="0.262" stop-color="#026691"/><stop offset="0.310" stop-color="#246391"/><stop offset="0.358" stop-color="#5e5f91"/><stop offset="0.401" stop-color="#a95a91"/><stop offset="0.449" stop-color="#ad3458"/><stop offset="0.513" stop-color="#ad1a31"/><stop offset="0.631" stop-color="#ad0713"/><stop offset="0.882" stop-color="#ad0001"/><stop offset="1.000" stop-color="#ad0000"/></linearGradient><linearGradient id="a74" gradientUnits="userSpaceOnUse" x1="750.7" x2="1128.9" y1="0" y2="0"><stop offset="0.000" stop-color="#006e91"/><stop offset="0.259" stop-color="#045e91"/><stop offset="0.312" stop-color="#2c5a91"/><stop offset="0.365" stop-color="#725491"/><stop offset="0.397" stop-color="#ab5191"/><stop offset="0.439" stop-color="#ad305d"/><stop offset="0.503" stop-color="#ad1834"/><stop offset="0.614" stop-color="#ad0616"/><stop offset="0.852" stop-color="#ad0002"/><stop offset="1.000" stop-color="#ad0000"/></linearGradient><linearGradient id="a75" gradientUnits="userSpaceOnUse" x1="751.6" x2="1133.0" y1="0" y2="0"><stop offset="0.000" stop-color="#006891"/><stop offset="0.247" stop-color="#025791"/><stop offset="0.300" stop-color="#275291"/><stop offset="0.353" stop-color="#684d91"/><stop offset="0.395" stop-color="#ad468e"/><stop offset="0.437" stop-color="#ad295b"/><stop offset="0.500" stop-color="#ad1434"/><stop offset="0.616" stop-color="#ad0415"/><stop offset="0.863" stop-color="#ad0002"/><stop offset="1.000" stop-color="#ad0000"/></linearGradient><linearGradient id="a76" gradientUnits="userSpaceOnUse" x1="752.5" x2="1135.2" y1="0" y2="0"><stop offset="0.000" stop-color="#006291"/><stop offset="0.246" stop-color="#045091"/><stop offset="0.298" stop-color="#2a4b91"/><stop offset="0.351" stop-color="#6b4591"/><stop offset="0.387" stop-color="#aa4091"/><stop offset="0.435" stop-color="#ad245b"/><stop offset="0.503" stop-color="#ad1032"/><stop offset="0.623" stop-color="#ad0214"/><stop offset="0.880" stop-color="#ad0002"/><stop offset="1.000" stop-color="#ad0000"/></linearGradient><linearGradient id="a77" gradientUnits="userSpaceOnUse" x1="753.5" x2="1135.0" y1="0" y2="0"><stop offset="0.000" stop-color="#005c91"/><stop offset="0.242" stop-color="#044991"/><stop offset="0.295" stop-color="#294491"/><stop offset="0.347" stop-color="#683e91"/><stop offset="0.389" stop-color="#ad3890"/><stop offset="0.432" stop-color="#ad205e"/><stop offset="0.495" stop-color="#ad0f37"/><stop offset="0.611" stop-color="#ad0217"/><stop offset="0.853" stop-color="#ad0003"/><stop offset="1.000" stop-color="#ad0000"/></linearGradient><linearGradient id="a78" gradientUnits="userSpaceOnUse" x1="754.4" x2="1128.5" y1="0" y2="0"><stop offset="0.000" stop-color="#005691"/><stop offset="0.241" stop-color="#044491"/><stop offset="0.294" stop-color="#273e91"/><stop offset="0.353" stop-color="#6b3791"/><stop offset="0.396" stop-color="#ad308f"/><stop offset="0.439" stop-color="#ad1c5e"/><stop offset="0.508" stop-color="#ad0b35"/><stop offset="0.631" stop-color="#ad0116"/><stop offset="0.893" stop-color="#ad0002"/><stop offset="1.000" stop-color="#ad0000"/></linearGradient><linearGradient id="a79" gradientUnits="userSpaceOnUse" x1="755.4" x2="1119.6" y1="0" y2="0"><stop offset="0.000" stop-color="#005191"/><stop offset="0.242" stop-color="#043e91"/><stop offset="0.302" stop-color="#2b3891"/><stop offset="0.363" stop-color="#6f3091"/><stop offset="0.401" stop-color="#ab2b91"/><stop offset="0.451" stop-color="#ad175d"/><stop offset="0.522" stop-color="#ad0935"/><stop offset="0.648" stop-color="#ad0016"/><stop offset="0.918" stop-color="#ad0002"/><stop offset="1.000" stop-color="#ad0001"/></linearGradient><linearGradient id="a80" gradientUnits="userSpaceOnUse" x1="756.4" x2="1110.8" y1="0" y2="0"><stop offset="0.000" stop-color="#004c91"/><stop offset="0.243" stop-color="#043991"/><stop offset="0.305" stop-color="#2a3291"/><stop offset="0.367" stop-color="#6c2b91"/><stop offset="0.412" stop-color="#ad2590"/><stop offset="0.458" stop-color="#ad1461"/><stop offset="0.531" stop-color="#ad0737"/><stop offset="0.661" stop-color="#ad0017"/><stop offset="0.932" stop-color="#ad0003"/><stop offset="1.000" stop-color="#ad0001"/></linearGradient><linearGradient id="a81" gradientUnits="userSpaceOnUse" x1="757.5" x2="1101.9" y1="0" y2="0"><stop offset="0.000" stop-color="#004791"/><stop offset="0.244" stop-color="#043491"/><stop offset="0.308" stop-color="#2a2d91"/><stop offset="0.372" stop-color="#692691"/><stop offset="0.419" stop-color="#aa2091"/><stop offset="0.477" stop-color="#ad0f5b"/><stop offset="0.558" stop-color="#ad0433"/><stop offset="0.703" stop-color="#ad0015"/><stop offset="1.000" stop-color="#ad0002"/></linearGradient><linearGradient id="a82" gradientUnits="userSpaceOnUse" x1="758.5" x2="1093.0" y1="0" y2="0"><stop offset="0.000" stop-color="#004291"/><stop offset="0.246" stop-color="#042f91"/><stop offset="0.311" stop-color="#292991"/><stop offset="0.383" stop-color="#6e2191"/><stop offset="0.431" stop-color="#ad1b91"/><stop offset="0.485" stop-color="#ad0d5e"/><stop offset="0.569" stop-color="#ad0335"/><stop offset="0.719" stop-color="#ad0016"/><stop offset="1.000" stop-color="#ad0003"/></linearGradient><linearGradient id="a83" gradientUnits="userSpaceOnUse" x1="759.6" x2="1084.1" y1="0" y2="0"><stop offset="0.000" stop-color="#003e91"/><stop offset="0.241" stop-color="#022b91"/><stop offset="0.309" stop-color="#242591"/><stop offset="0.383" stop-color="#641d91"/><stop offset="0.444" stop-color="#ad158e"/><stop offset="0.500" stop-color="#ad0a5d"/><stop offset="0.586" stop-color="#ad0235"/><stop offset="0.741" stop-color="#ad0016"/><stop offset="1.000" stop-color="#ad0004"/></linearGradient><linearGradient id="a84" gradientUnits="userSpaceOnUse" x1="760.7" x2="1075.3" y1="0" y2="0"><stop offset="0.000" stop-color="#003a91"/><stop offset="0.242" stop-color="#022791"/><stop offset="0.318" stop-color="#282091"/><stop offset="0.395" stop-color="#691891"/><stop offset="0.452" stop-color="#ad1291"/><stop offset="0.510" stop-color="#ad0860"/><stop offset="0.599" stop-color="#ad0137"/><stop offset="0.758" stop-color="#ad0017"/><stop offset="1.000" stop-color="#ad0006"/></linearGradient><linearGradient id="a85" gradientUnits="userSpaceOnUse" x1="761.9" x2="1066.4" y1="0" y2="0"><stop offset="0.000" stop-color="#003591"/><stop offset="0.243" stop-color="#032391"/><stop offset="0.322" stop-color="#271c91"/><stop offset="0.401" stop-color="#661591"/><stop offset="0.467" stop-color="#ad0e8e"/><stop offset="0.526" stop-color="#ad055f"/><stop offset="0.625" stop-color="#ad0035"/><stop offset="0.796" stop-color="#ad0016"/><stop offset="1.000" stop-color="#ad0008"/></linearGradient><linearGradient id="a86" gradientUnits="userSpaceOnUse" x1="763.1" x2="1057.5" y1="0" y2="0"><stop offset="0.000" stop-color="#003191"/><stop offset="0.245" stop-color="#032091"/><stop offset="0.327" stop-color="#271991"/><stop offset="0.415" stop-color="#6a1191"/><stop offset="0.476" stop-color="#ad0b91"/><stop offset="0.544" stop-color="#ad035e"/><stop offset="0.646" stop-color="#ad0035"/><stop offset="0.830" stop-color="#ad0016"/><stop offset="1.000" stop-color="#ad0009"/></linearGradient><linearGradient id="a87" gradientUnits="userSpaceOnUse" x1="764.3" x2="1048.6" y1="0" y2="0"><stop offset="0.000" stop-color="#002d91"/><stop offset="0.246" stop-color="#031c91"/><stop offset="0.338" stop-color="#2a1591"/><stop offset="0.430" stop-color="#6f0d91"/><stop offset="0.493" stop-color="#ad088f"/><stop offset="0.563" stop-color="#ad015c"/><stop offset="0.676" stop-color="#ad0033"/><stop offset="0.873" stop-color="#ad0015"/><stop offset="1.000" stop-color="#ad000c"/></linearGradient><linearGradient id="a88" gradientUnits="userSpaceOnUse" x1="765.5" x2="1039.8" y1="0" y2="0"><stop offset="0.000" stop-color="#002a91"/><stop offset="0.248" stop-color="#031991"/><stop offset="0.343" stop-color="#2a1291"/><stop offset="0.438" stop-color="#6d0b91"/><stop offset="0.504" stop-color="#ad0591"/><stop offset="0.577" stop-color="#ad005f"/><stop offset="0.686" stop-color="#ad0037"/><stop offset="0.883" stop-color="#ad0017"/><stop offset="1.000" stop-color="#ad000e"/></linearGradient><linearGradient id="a89" gradientUnits="userSpaceOnUse" x1="766.8" x2="1030.9" y1="0" y2="0"><stop offset="0.000" stop-color="#002691"/><stop offset="0.250" stop-color="#041691"/><stop offset="0.348" stop-color="#2a0f91"/><stop offset="0.447" stop-color="#6b0891"/><stop offset="0.523" stop-color="#ad038f"/><stop offset="0.598" stop-color="#ad005e"/><stop offset="0.720" stop-color="#ad0035"/><stop offset="0.932" stop-color="#ad0016"/><stop offset="1.000" stop-color="#ad0011"/></linearGradient><linearGradient id="a90" gradientUnits="userSpaceOnUse" x1="768.2" x2="1022.0" y1="0" y2="0"><stop offset="0.000" stop-color="#002391"/><stop offset="0.254" stop-color="#041391"/><stop offset="0.357" stop-color="#2b0d91"/><stop offset="0.460" stop-color="#6c0691"/><stop offset="0.540" stop-color="#ad018e"/><stop offset="0.619" stop-color="#ad005e"/><stop offset="0.746" stop-color="#ad0035"/><stop offset="0.968" stop-color="#ad0016"/><stop offset="1.000" stop-color="#ad0014"/></linearGradient><linearGradient id="a91" gradientUnits="userSpaceOnUse" x1="769.6" x2="1013.1" y1="0" y2="0"><stop offset="0.000" stop-color="#001f91"/><stop offset="0.248" stop-color="#031191"/><stop offset="0.355" stop-color="#270b91"/><stop offset="0.471" stop-color="#6a0491"/><stop offset="0.554" stop-color="#ad0091"/><stop offset="0.636" stop-color="#ad0060"/><stop offset="0.769" stop-color="#ad0037"/><stop offset="1.000" stop-color="#ad0017"/></linearGradient><linearGradient id="a92" gradientUnits="userSpaceOnUse" x1="771.0" x2="1004.3" y1="0" y2="0"><stop offset="0.000" stop-color="#001c91"/><stop offset="0.250" stop-color="#030f91"/><stop offset="0.371" stop-color="#2a0891"/><stop offset="0.491" stop-color="#6e0291"/><stop offset="0.578" stop-color="#ad008e"/><stop offset="0.672" stop-color="#ad005c"/><stop offset="0.819" stop-color="#ad0034"/><stop offset="1.000" stop-color="#ad001b"/></linearGradient><linearGradient id="a93" gradientUnits="userSpaceOnUse" x1="772.5" x2="995.4" y1="0" y2="0"><stop offset="0.000" stop-color="#001991"/><stop offset="0.252" stop-color="#040d91"/><stop offset="0.378" stop-color="#2a0691"/><stop offset="0.505" stop-color="#6c0191"/><stop offset="0.595" stop-color="#ad0091"/><stop offset="0.694" stop-color="#ad005e"/><stop offset="0.847" stop-color="#ad0035"/><stop offset="1.000" stop-color="#ad0020"/></linearGradient><linearGradient id="a94" gradientUnits="userSpaceOnUse" x1="774.0" x2="986.5" y1="0" y2="0"><stop offset="0.000" stop-color="#001691"/><stop offset="0.255" stop-color="#040b91"/><stop offset="0.387" stop-color="#2a0491"/><stop offset="0.519" stop-color="#6b0091"/><stop offset="0.623" stop-color="#ad008d"/><stop offset="0.726" stop-color="#ad005d"/><stop offset="0.887" stop-color="#ad0035"/><stop offset="1.000" stop-color="#ad0025"/></linearGradient><linearGradient id="a95" gradientUnits="userSpaceOnUse" x1="775.4" x2="977.6" y1="0" y2="0"><stop offset="0.000" stop-color="#001491"/><stop offset="0.257" stop-color="#040991"/><stop offset="0.406" stop-color="#2e0391"/><stop offset="0.554" stop-color="#750091"/><stop offset="0.644" stop-color="#ad0090"/><stop offset="0.752" stop-color="#ad005f"/><stop offset="0.921" stop-color="#ad0037"/><stop offset="1.000" stop-color="#ad002b"/></linearGradient><linearGradient id="a96" gradientUnits="userSpaceOnUse" x1="777.0" x2="968.8" y1="0" y2="0"><stop offset="0.000" stop-color="#001191"/><stop offset="0.253" stop-color="#030791"/><stop offset="0.411" stop-color="#2b0291"/><stop offset="0.568" stop-color="#700091"/><stop offset="0.674" stop-color="#ad008f"/><stop offset="0.789" stop-color="#ad005e"/><stop offset="0.979" stop-color="#ad0035"/><stop offset="1.000" stop-color="#ad0032"/></linearGradient><linearGradient id="a97" gradientUnits="userSpaceOnUse" x1="778.5" x2="959.9" y1="0" y2="0"><stop offset="0.000" stop-color="#000f91"/><stop offset="0.256" stop-color="#040691"/><stop offset="0.422" stop-color="#2b0191"/><stop offset="0.589" stop-color="#6f0091"/><stop offset="0.700" stop-color="#ad0091"/><stop offset="0.822" stop-color="#ad0061"/><stop offset="1.000" stop-color="#ad003a"/></linearGradient><linearGradient id="a98" gradientUnits="userSpaceOnUse" x1="780.1" x2="951.0" y1="0" y2="0"><stop offset="0.000" stop-color="#000c91"/><stop offset="0.259" stop-color="#040491"/><stop offset="0.435" stop-color="#2b0091"/><stop offset="0.612" stop-color="#6d0091"/><stop offset="0.741" stop-color="#ad008e"/><stop offset="0.882" stop-color="#ad005c"/><stop offset="1.000" stop-color="#ad0043"/></linearGradient><linearGradient id="a99" gradientUnits="userSpaceOnUse" x1="781.8" x2="942.1" y1="0" y2="0"><stop offset="0.000" stop-color="#000a91"/><stop offset="0.263" stop-color="#050391"/><stop offset="0.463" stop-color="#2f0091"/><stop offset="0.650" stop-color="#710091"/><stop offset="0.775" stop-color="#ad0091"/><stop offset="0.925" stop-color="#ad005e"/><stop offset="1.000" stop-color="#ad004e"/></linearGradient><linearGradient id="a100" gradientUnits="userSpaceOnUse" x1="783.5" x2="933.3" y1="0" y2="0"><stop offset="0.000" stop-color="#000891"/><stop offset="0.257" stop-color="#040291"/><stop offset="0.473" stop-color="#2d0091"/><stop offset="0.689" stop-color="#730091"/><stop offset="0.824" stop-color="#ad008f"/><stop offset="0.986" stop-color="#ad005d"/><stop offset="1.000" stop-color="#ad005a"/></linearGradient><linearGradient id="a101" gradientUnits="userSpaceOnUse" x1="785.3" x2="924.4" y1="0" y2="0"><stop offset="0.000" stop-color="#000691"/><stop offset="0.261" stop-color="#040191"/><stop offset="0.493" stop-color="#2d0091"/><stop offset="0.725" stop-color="#720091"/><stop offset="0.870" stop-color="#ad0091"/><stop offset="1.000" stop-color="#ad0069"/></linearGradient><linearGradient id="a102" gradientUnits="userSpaceOnUse" x1="787.2" x2="915.5" y1="0" y2="0"><stop offset="0.000" stop-color="#000591"/><stop offset="0.266" stop-color="#050091"/><stop offset="0.516" stop-color="#2d0091"/><stop offset="0.766" stop-color="#710091"/><stop offset="0.938" stop-color="#ad008f"/><stop offset="1.000" stop-color="#ad007c"/></linearGradient><linearGradient id="a103" gradientUnits="userSpaceOnUse" x1="789.2" x2="906.6" y1="0" y2="0"><stop offset="0.000" stop-color="#000391"/><stop offset="0.259" stop-color="#040091"/><stop offset="0.534" stop-color="#2c0091"/><stop offset="0.810" stop-color="#6e0091"/><stop offset="1.000" stop-color="#ad0091"/></linearGradient><linearGradient id="a104" gradientUnits="userSpaceOnUse" x1="791.3" x2="897.8" y1="0" y2="0"><stop offset="0.000" stop-color="#000291"/><stop offset="0.264" stop-color="#050091"/><stop offset="0.585" stop-color="#2f0091"/><stop offset="0.906" stop-color="#770091"/><stop offset="1.000" stop-color="#920091"/></linearGradient><linearGradient id="a105" gradientUnits="userSpaceOnUse" x1="793.5" x2="888.9" y1="0" y2="0"><stop offset="0.000" stop-color="#000191"/><stop offset="0.277" stop-color="#060091"/><stop offset="0.638" stop-color="#320091"/><stop offset="1.000" stop-color="#7a0091"/></linearGradient><linearGradient id="a106" gradientUnits="userSpaceOnUse" x1="795.9" x2="880.0" y1="0" y2="0"><stop offset="0.000" stop-color="#000091"/><stop offset="0.286" stop-color="#070091"/><stop offset="0.690" stop-color="#320091"/><stop offset="1.000" stop-color="#650091"/></linearGradient><linearGradient id="a107" gradientUnits="userSpaceOnUse" x1="798.7" x2="871.1" y1="0" y2="0"><stop offset="0.000" stop-color="#000091"/><stop offset="0.333" stop-color="#0a0091"/><stop offset="0.833" stop-color="#3b0091"/><stop offset="1.000" stop-color="#520091"/></linearGradient><linearGradient id="a108" gradientUnits="userSpaceOnUse" x1="801.7" x2="862.3" y1="0" y2="0"><stop offset="0.000" stop-color="#000091"/><stop offset="0.433" stop-color="#100091"/><stop offset="1.000" stop-color="#420091"/></linearGradient><linearGradient id="a109" gradientUnits="userSpaceOnUse" x1="805.3" x2="853.4" y1="0" y2="0"><stop offset="0.000" stop-color="#000091"/><stop offset="0.667" stop-color="#1c0091"/><stop offset="1.000" stop-color="#330091"/></linearGradient><linearGradient id="a110" gradientUnits="userSpaceOnUse" x1="809.6" x2="844.5" y1="0" y2="0"><stop offset="0.000" stop-color="#030091"/><stop offset="1.000" stop-color="#270091"/></linearGradient><linearGradient id="a111" gradientUnits="userSpaceOnUse" x1="814.3" x2="835.6" y1="0" y2="0"><stop offset="0.000" stop-color="#070091"/><stop offset="1.000" stop-color="#1c0091"/></linearGradient><linearGradient id="a112" gradientUnits="userSpaceOnUse" x1="819.0" x2="826.8" y1="0" y2="0"><stop offset="0.000" stop-color="#0b0091"/><stop offset="1.000" stop-color="#130091"/></linearGradient><linearGradient id="b0" gradientUnits="userSpaceOnUse" x1="871.9" x2="878.3" y1="0" y2="0"><stop offset="0.000" stop-color="#00ff00"/><stop offset="1.000" stop-color="#00ff00"/></linearGradient><linearGradient id="b1" gradientUnits="userSpaceOnUse" x1="871.2" x2="882.9" y1="0" y2="0"><stop offset="0.000" stop-color="#00ff00"/><stop offset="1.000" stop-color="#00ff00"/></linearGradient><linearGradient id="b2" gradientUnits="userSpaceOnUse" x1="870.4" x2="887.5" y1="0" y2="0"><stop offset="0.000" stop-color="#00ff00"/><stop offset="1.000" stop-color="#00ff00"/></linearGradient><linearGradient id="b3" gradientUnits="userSpaceOnUse" x1="869.7" x2="892.1" y1="0" y2="0"><stop offset="0.000" stop-color="#00ff00"/><stop offset="1.000" stop-color="#00ff00"/></linearGradient><linearGradient id="b4" gradientUnits="userSpaceOnUse" x1="868.9" x2="896.8" y1="0" y2="0"><stop offset="0.000" stop-color="#00ff00"/><stop offset="1.000" stop-color="#00ff00"/></linearGradient><linearGradient id="b5" gradientUnits="userSpaceOnUse" x1="868.2" x2="901.4" y1="0" y2="0"><stop offset="0.000" stop-color="#00ff00"/><stop offset="1.000" stop-color="#00ff00"/></linearGradient><linearGradient id="b6" gradientUnits="userSpaceOnUse" x1="867.4" x2="906.0" y1="0" y2="0"><stop offset="0.000" stop-color="#00ff00"/><stop offset="0.947" stop-color="#02ff00"/><stop offset="1.000" stop-color="#04ff00"/></linearGradient><linearGradient id="b7" gradientUnits="userSpaceOnUse" x1="866.6" x2="910.6" y1="0" y2="0"><stop offset="0.000" stop-color="#00ff00"/><stop offset="0.857" stop-color="#04ff00"/><stop offset="1.000" stop-color="#0aff00"/></linearGradient><linearGradient id="b8" gradientUnits="userSpaceOnUse" x1="865.9" x2="915.2" y1="0" y2="0"><stop offset="0.000" stop-color="#00ff01"/><stop offset="0.750" stop-color="#03ff00"/><stop offset="1.000" stop-color="#11ff00"/></linearGradient><linearGradient id="b9" gradientUnits="userSpaceOnUse" x1="865.1" x2="919.9" y1="0" y2="0"><stop offset="0.000" stop-color="#00ff02"/><stop offset="0.667" stop-color="#03ff00"/><stop offset="1.000" stop-color="#1aff00"/></linearGradient><linearGradient id="b10" gradientUnits="userSpaceOnUse" x1="864.4" x2="924.5" y1="0" y2="0"><stop offset="0.000" stop-color="#00ff03"/><stop offset="0.600" stop-color="#03ff00"/><stop offset="1.000" stop-color="#25ff00"/></linearGradient><linearGradient id="b11" gradientUnits="userSpaceOnUse" x1="863.6" x2="929.1" y1="0" y2="0"><stop offset="0.000" stop-color="#00ff04"/><stop offset="0.531" stop-color="#03ff00"/><stop offset="0.875" stop-color="#21ff00"/><stop offset="1.000" stop-color="#31ff00"/></linearGradient><linearGradient id="b12" gradientUnits="userSpaceOnUse" x1="862.9" x2="933.7" y1="0" y2="0"><stop offset="0.000" stop-color="#00ff06"/><stop offset="0.486" stop-color="#03ff00"/><stop offset="0.800" stop-color="#21ff00"/><stop offset="1.000" stop-color="#3fff00"/></linearGradient><linearGradient id="b13" gradientUnits="userSpaceOnUse" x1="862.1" x2="938.4" y1="0" y2="0"><stop offset="0.000" stop-color="#00ff07"/><stop offset="0.447" stop-color="#03ff00"/><stop offset="0.737" stop-color="#22ff00"/><stop offset="1.000" stop-color="#4fff00"/></linearGradient><linearGradient id="b14" gradientUnits="userSpaceOnUse" x1="861.4" x2="943.0" y1="0" y2="0"><stop offset="0.000" stop-color="#00ff09"/><stop offset="0.400" stop-color="#02ff01"/><stop offset="0.675" stop-color="#21ff00"/><stop offset="0.975" stop-color="#5bff00"/><stop offset="1.000" stop-color="#60ff00"/></linearGradient><linearGradient id="b15" gradientUnits="userSpaceOnUse" x1="860.6" x2="947.6" y1="0" y2="0"><stop offset="0.000" stop-color="#00ff0b"/><stop offset="0.372" stop-color="#02ff03"/><stop offset="0.628" stop-color="#22ff00"/><stop offset="0.907" stop-color="#5cff00"/><stop offset="1.000" stop-color="#74ff00"/></linearGradient><linearGradient id="b16" gradientUnits="userSpaceOnUse" x1="859.9" x2="952.2" y1="0" y2="0"><stop offset="0.000" stop-color="#00ff0d"/><stop offset="0.348" stop-color="#02ff04"/><stop offset="0.587" stop-color="#23ff00"/><stop offset="0.848" stop-color="#5dff00"/><stop offset="1.000" stop-color="#8bff00"/></linearGradient><linearGradient id="b17" gradientUnits="userSpaceOnUse" x1="859.1" x2="956.8" y1="0" y2="0"><stop offset="0.000" stop-color="#00ff0f"/><stop offset="0.333" stop-color="#03ff06"/><stop offset="0.562" stop-color="#26ff01"/><stop offset="0.792" stop-color="#5eff00"/><stop offset="1.000" stop-color="#a4ff00"/></linearGradient><linearGradient id="b18" gradientUnits="userSpaceOnUse" x1="858.4" x2="961.5" y1="0" y2="0"><stop offset="0.000" stop-color="#00ff12"/><stop offset="0.314" stop-color="#03ff08"/><stop offset="0.510" stop-color="#22ff03"/><stop offset="0.725" stop-color="#5aff00"/><stop offset="0.941" stop-color="#a7ff00"/><stop offset="1.000" stop-color="#c0ff00"/></linearGradient><linearGradient id="b19" gradientUnits="userSpaceOnUse" x1="857.6" x2="966.1" y1="0" y2="0"><stop offset="0.000" stop-color="#00ff15"/><stop offset="0.296" stop-color="#04ff0a"/><stop offset="0.481" stop-color="#23ff04"/><stop offset="0.685" stop-color="#5cff00"/><stop offset="0.889" stop-color="#aaff00"/><stop offset="1.000" stop-color="#dfff00"/></linearGradient><linearGradient id="b20" gradientUnits="userSpaceOnUse" x1="856.9" x2="970.7" y1="0" y2="0"><stop offset="0.000" stop-color="#00ff18"/><stop offset="0.268" stop-color="#02ff0d"/><stop offset="0.446" stop-color="#22ff07"/><stop offset="0.643" stop-color="#5bff01"/><stop offset="0.839" stop-color="#acff00"/><stop offset="1.000" stop-color="#fffc00"/></linearGradient><linearGradient id="b21" gradientUnits="userSpaceOnUse" x1="856.1" x2="975.3" y1="0" y2="0"><stop offset="0.000" stop-color="#00ff1b"/><stop offset="0.254" stop-color="#03ff10"/><stop offset="0.424" stop-color="#23ff09"/><stop offset="0.610" stop-color="#5eff02"/><stop offset="0.780" stop-color="#a8ff00"/><stop offset="0.932" stop-color="#fdff00"/><stop offset="1.000" stop-color="#ffda00"/></linearGradient><linearGradient id="b22" gradientUnits="userSpaceOnUse" x1="855.4" x2="980.0" y1="0" y2="0"><stop offset="0.000" stop-color="#00ff1e"/><stop offset="0.242" stop-color="#03ff13"/><stop offset="0.403" stop-color="#24ff0c"/><stop offset="0.581" stop-color="#60ff04"/><stop offset="0.742" stop-color="#acff00"/><stop offset="0.871" stop-color="#f8ff00"/><stop offset="0.887" stop-color="#fffb00"/><stop offset="1.000" stop-color="#ffbe00"/></linearGradient><linearGradient id="b23" gradientUnits="userSpaceOnUse" x1="854.6" x2="984.6" y1="0" y2="0"><stop offset="0.000" stop-color="#00ff21"/><stop offset="0.219" stop-color="#02ff17"/><stop offset="0.359" stop-color="#1eff10"/><stop offset="0.516" stop-color="#53ff08"/><stop offset="0.672" stop-color="#9cff02"/><stop offset="0.812" stop-color="#f2ff00"/><stop offset="0.828" stop-color="#fdff00"/><stop offset="0.953" stop-color="#ffba00"/><stop offset="1.000" stop-color="#ffa600"/></linearGradient><linearGradient id="b24" gradientUnits="userSpaceOnUse" x1="853.9" x2="989.2" y1="0" y2="0"><stop offset="0.000" stop-color="#00ff25"/><stop offset="0.209" stop-color="#02ff1a"/><stop offset="0.343" stop-color="#1fff13"/><stop offset="0.493" stop-color="#55ff0b"/><stop offset="0.642" stop-color="#a0ff04"/><stop offset="0.776" stop-color="#f8ff00"/><stop offset="0.791" stop-color="#fffb00"/><stop offset="0.881" stop-color="#ffc300"/><stop offset="1.000" stop-color="#ff9100"/></linearGradient><linearGradient id="b25" gradientUnits="userSpaceOnUse" x1="853.1" x2="993.8" y1="0" y2="0"><stop offset="0.000" stop-color="#00ff29"/><stop offset="0.200" stop-color="#02ff1e"/><stop offset="0.329" stop-color="#20ff16"/><stop offset="0.471" stop-color="#57ff0e"/><stop offset="0.614" stop-color="#a4ff06"/><stop offset="0.743" stop-color="#ffff01"/><stop offset="0.829" stop-color="#ffc600"/><stop offset="0.943" stop-color="#ff9200"/><stop offset="1.000" stop-color="#ff7f00"/></linearGradient><linearGradient id="b26" gradientUnits="userSpaceOnUse" x1="852.4" x2="998.4" y1="0" y2="0"><stop offset="0.000" stop-color="#00ff2d"/><stop offset="0.192" stop-color="#03ff22"/><stop offset="0.315" stop-color="#22ff1a"/><stop offset="0.452" stop-color="#5aff12"/><stop offset="0.589" stop-color="#a9ff09"/><stop offset="0.699" stop-color="#fbff03"/><stop offset="0.740" stop-color="#ffe301"/><stop offset="0.836" stop-color="#ffab00"/><stop offset="0.959" stop-color="#ff7b00"/><stop offset="1.000" stop-color="#ff6f00"/></linearGradient><linearGradient id="b27" gradientUnits="userSpaceOnUse" x1="851.6" x2="1003.1" y1="0" y2="0"><stop offset="0.000" stop-color="#00ff32"/><stop offset="0.187" stop-color="#03ff26"/><stop offset="0.307" stop-color="#24ff1e"/><stop offset="0.440" stop-color="#60ff15"/><stop offset="0.560" stop-color="#aaff0d"/><stop offset="0.667" stop-color="#ffff06"/><stop offset="0.747" stop-color="#ffc401"/><stop offset="0.853" stop-color="#ff8f00"/><stop offset="1.000" stop-color="#ff6100"/></linearGradient><linearGradient id="b28" gradientUnits="userSpaceOnUse" x1="850.9" x2="1007.7" y1="0" y2="0"><stop offset="0.000" stop-color="#00ff36"/><stop offset="0.167" stop-color="#02ff2c"/><stop offset="0.282" stop-color="#21ff24"/><stop offset="0.410" stop-color="#5cff1a"/><stop offset="0.526" stop-color="#a6ff12"/><stop offset="0.628" stop-color="#faff0a"/><stop offset="0.654" stop-color="#ffed08"/><stop offset="0.731" stop-color="#ffb702"/><stop offset="0.833" stop-color="#ff8600"/><stop offset="0.987" stop-color="#ff5800"/><stop offset="1.000" stop-color="#ff5500"/></linearGradient><linearGradient id="b29" gradientUnits="userSpaceOnUse" x1="850.1" x2="1012.3" y1="0" y2="0"><stop offset="0.000" stop-color="#00ff3c"/><stop offset="0.160" stop-color="#02ff31"/><stop offset="0.272" stop-color="#22ff28"/><stop offset="0.395" stop-color="#5fff1f"/><stop offset="0.506" stop-color="#abff16"/><stop offset="0.605" stop-color="#fffc0e"/><stop offset="0.679" stop-color="#ffc006"/><stop offset="0.778" stop-color="#ff8b01"/><stop offset="0.914" stop-color="#ff5e00"/><stop offset="1.000" stop-color="#ff4a00"/></linearGradient><linearGradient id="b30" gradientUnits="userSpaceOnUse" x1="849.3" x2="1016.9" y1="0" y2="0"><stop offset="0.000" stop-color="#00ff41"/><stop offset="0.157" stop-color="#03ff36"/><stop offset="0.253" stop-color="#20ff2e"/><stop offset="0.361" stop-color="#56ff25"/><stop offset="0.470" stop-color="#a2ff1c"/><stop offset="0.566" stop-color="#f9ff14"/><stop offset="0.590" stop-color="#ffed10"/><stop offset="0.663" stop-color="#ffb508"/><stop offset="0.759" stop-color="#ff8302"/><stop offset="0.892" stop-color="#ff5700"/><stop offset="1.000" stop-color="#ff4000"/></linearGradient><linearGradient id="b31" gradientUnits="userSpaceOnUse" x1="848.6" x2="1021.6" y1="0" y2="0"><stop offset="0.000" stop-color="#00ff47"/><stop offset="0.151" stop-color="#03ff3b"/><stop offset="0.244" stop-color="#22ff34"/><stop offset="0.349" stop-color="#59ff2b"/><stop offset="0.453" stop-color="#a7ff21"/><stop offset="0.547" stop-color="#fffc18"/><stop offset="0.616" stop-color="#ffbf0d"/><stop offset="0.709" stop-color="#ff8905"/><stop offset="0.837" stop-color="#ff5a00"/><stop offset="1.000" stop-color="#ff3800"/></linearGradient><linearGradient id="b32" gradientUnits="userSpaceOnUse" x1="847.8" x2="1026.2" y1="0" y2="0"><stop offset="0.000" stop-color="#00ff4d"/><stop offset="0.146" stop-color="#04ff41"/><stop offset="0.236" stop-color="#23ff3a"/><stop offset="0.337" stop-color="#5dff31"/><stop offset="0.438" stop-color="#adff27"/><stop offset="0.517" stop-color="#feff1f"/><stop offset="0.584" stop-color="#ffc112"/><stop offset="0.663" stop-color="#ff8f09"/><stop offset="0.775" stop-color="#ff6102"/><stop offset="0.944" stop-color="#ff3900"/><stop offset="1.000" stop-color="#ff3000"/></linearGradient><linearGradient id="b33" gradientUnits="userSpaceOnUse" x1="847.1" x2="1030.8" y1="0" y2="0"><stop offset="0.000" stop-color="#00ff53"/><stop offset="0.132" stop-color="#02ff49"/><stop offset="0.220" stop-color="#21ff41"/><stop offset="0.319" stop-color="#5bff38"/><stop offset="0.407" stop-color="#a3ff2f"/><stop offset="0.495" stop-color="#fffd25"/><stop offset="0.549" stop-color="#ffc619"/><stop offset="0.626" stop-color="#ff920d"/><stop offset="0.736" stop-color="#ff6204"/><stop offset="0.890" stop-color="#ff3b00"/><stop offset="1.000" stop-color="#ff2a00"/></linearGradient><linearGradient id="b34" gradientUnits="userSpaceOnUse" x1="846.3" x2="1035.4" y1="0" y2="0"><stop offset="0.000" stop-color="#00ff5a"/><stop offset="0.128" stop-color="#02ff50"/><stop offset="0.213" stop-color="#22ff48"/><stop offset="0.309" stop-color="#5fff3f"/><stop offset="0.394" stop-color="#a9ff36"/><stop offset="0.468" stop-color="#fdff2e"/><stop offset="0.532" stop-color="#ffbf1d"/><stop offset="0.606" stop-color="#ff8c10"/><stop offset="0.713" stop-color="#ff5e06"/><stop offset="0.862" stop-color="#ff3800"/><stop offset="1.000" stop-color="#ff2400"/></linearGradient><linearGradient id="b35" gradientUnits="userSpaceOnUse" x1="845.6" x2="1040.0" y1="0" y2="0"><stop offset="0.000" stop-color="#00ff61"/><stop offset="0.124" stop-color="#03ff57"/><stop offset="0.206" stop-color="#24ff50"/><stop offset="0.289" stop-color="#5aff47"/><stop offset="0.371" stop-color="#a5ff3f"/><stop offset="0.443" stop-color="#f9ff36"/><stop offset="0.454" stop-color="#fff833"/><stop offset="0.505" stop-color="#ffc123"/><stop offset="0.577" stop-color="#ff8d14"/><stop offset="0.680" stop-color="#ff5e08"/><stop offset="0.825" stop-color="#ff3801"/><stop offset="1.000" stop-color="#ff1e00"/></linearGradient><linearGradient id="b36" gradientUnits="userSpaceOnUse" x1="844.8" x2="1044.7" y1="0" y2="0"><stop offset="0.000" stop-color="#00ff69"/><stop offset="0.111" stop-color="#01ff60"/><stop offset="0.182" stop-color="#1cff59"/><stop offset="0.263" stop-color="#50ff51"/><stop offset="0.343" stop-color="#9aff49"/><stop offset="0.414" stop-color="#edff40"/><stop offset="0.424" stop-color="#fbff3f"/><stop offset="0.455" stop-color="#ffdd33"/><stop offset="0.515" stop-color="#ffa521"/><stop offset="0.596" stop-color="#ff7412"/><stop offset="0.707" stop-color="#ff4b07"/><stop offset="0.879" stop-color="#ff2800"/><stop offset="1.000" stop-color="#ff1900"/></linearGradient><linearGradient id="b37" gradientUnits="userSpaceOnUse" x1="844.1" x2="1049.3" y1="0" y2="0"><stop offset="0.000" stop-color="#00ff71"/><stop offset="0.108" stop-color="#02ff68"/><stop offset="0.176" stop-color="#1eff62"/><stop offset="0.255" stop-color="#54ff5a"/><stop offset="0.333" stop-color="#a0ff51"/><stop offset="0.402" stop-color="#f7ff49"/><stop offset="0.412" stop-color="#fff946"/><stop offset="0.461" stop-color="#ffc031"/><stop offset="0.529" stop-color="#ff8a1e"/><stop offset="0.618" stop-color="#ff5e0f"/><stop offset="0.755" stop-color="#ff3704"/><stop offset="0.971" stop-color="#ff1800"/><stop offset="1.000" stop-color="#ff1500"/></linearGradient><linearGradient id="b38" gradientUnits="userSpaceOnUse" x1="843.3" x2="1053.9" y1="0" y2="0"><stop offset="0.000" stop-color="#00ff7a"/><stop offset="0.105" stop-color="#02ff71"/><stop offset="0.171" stop-color="#1fff6b"/><stop offset="0.248" stop-color="#58ff63"/><stop offset="0.324" stop-color="#a7ff5b"/><stop offset="0.390" stop-color="#fffd52"/><stop offset="0.438" stop-color="#ffc13a"/><stop offset="0.505" stop-color="#ff8a24"/><stop offset="0.590" stop-color="#ff5e13"/><stop offset="0.714" stop-color="#ff3807"/><stop offset="0.914" stop-color="#ff1900"/><stop offset="1.000" stop-color="#ff1100"/></linearGradient><linearGradient id="b39" gradientUnits="userSpaceOnUse" x1="842.6" x2="1058.5" y1="0" y2="0"><stop offset="0.000" stop-color="#00ff83"/><stop offset="0.103" stop-color="#03ff7b"/><stop offset="0.168" stop-color="#22ff75"/><stop offset="0.243" stop-color="#5eff6d"/><stop offset="0.308" stop-color="#a6ff66"/><stop offset="0.364" stop-color="#f4ff5f"/><stop offset="0.374" stop-color="#fffb5d"/><stop offset="0.421" stop-color="#ffbf42"/><stop offset="0.477" stop-color="#ff8e2c"/><stop offset="0.561" stop-color="#ff5f19"/><stop offset="0.682" stop-color="#ff3809"/><stop offset="0.869" stop-color="#ff1900"/><stop offset="1.000" stop-color="#ff0e00"/></linearGradient><linearGradient id="b40" gradientUnits="userSpaceOnUse" x1="841.8" x2="1063.2" y1="0" y2="0"><stop offset="0.000" stop-color="#00ff8d"/><stop offset="0.100" stop-color="#03ff85"/><stop offset="0.164" stop-color="#24ff80"/><stop offset="0.227" stop-color="#59ff79"/><stop offset="0.291" stop-color="#a1ff72"/><stop offset="0.355" stop-color="#ffff6b"/><stop offset="0.400" stop-color="#ffc04c"/><stop offset="0.455" stop-color="#ff8e34"/><stop offset="0.536" stop-color="#ff5e1d"/><stop offset="0.655" stop-color="#ff370c"/><stop offset="0.836" stop-color="#ff1901"/><stop offset="1.000" stop-color="#ff0b00"/></linearGradient><linearGradient id="b41" gradientUnits="userSpaceOnUse" x1="841.1" x2="1067.8" y1="0" y2="0"><stop offset="0.000" stop-color="#00ff98"/><stop offset="0.088" stop-color="#01ff91"/><stop offset="0.142" stop-color="#1aff8d"/><stop offset="0.204" stop-color="#4cff87"/><stop offset="0.265" stop-color="#91ff81"/><stop offset="0.327" stop-color="#ecff7a"/><stop offset="0.336" stop-color="#fcff79"/><stop offset="0.389" stop-color="#ffb852"/><stop offset="0.442" stop-color="#ff8738"/><stop offset="0.522" stop-color="#ff5a21"/><stop offset="0.637" stop-color="#ff340e"/><stop offset="0.823" stop-color="#ff1602"/><stop offset="1.000" stop-color="#ff0800"/></linearGradient><linearGradient id="b42" gradientUnits="userSpaceOnUse" x1="840.3" x2="1072.4" y1="0" y2="0"><stop offset="0.000" stop-color="#00ffa3"/><stop offset="0.086" stop-color="#02ff9d"/><stop offset="0.138" stop-color="#1cff99"/><stop offset="0.198" stop-color="#50ff94"/><stop offset="0.259" stop-color="#98ff8e"/><stop offset="0.310" stop-color="#e9ff88"/><stop offset="0.319" stop-color="#f8ff87"/><stop offset="0.328" stop-color="#fff782"/><stop offset="0.371" stop-color="#ffb95d"/><stop offset="0.422" stop-color="#ff8741"/><stop offset="0.500" stop-color="#ff5926"/><stop offset="0.612" stop-color="#ff3312"/><stop offset="0.784" stop-color="#ff1603"/><stop offset="1.000" stop-color="#ff0600"/></linearGradient><linearGradient id="b43" gradientUnits="userSpaceOnUse" x1="839.6" x2="1077.0" y1="0" y2="0"><stop offset="0.000" stop-color="#00ffb0"/><stop offset="0.085" stop-color="#03ffaa"/><stop offset="0.136" stop-color="#1fffa6"/><stop offset="0.195" stop-color="#56ffa1"/><stop offset="0.254" stop-color="#a3ff9c"/><stop offset="0.305" stop-color="#f9ff97"/><stop offset="0.314" stop-color="#fff590"/><stop offset="0.347" stop-color="#ffc16f"/><stop offset="0.398" stop-color="#ff8b4c"/><stop offset="0.466" stop-color="#ff5e30"/><stop offset="0.568" stop-color="#ff3718"/><stop offset="0.729" stop-color="#ff1807"/><stop offset="1.000" stop-color="#ff0400"/></linearGradient><linearGradient id="b44" gradientUnits="userSpaceOnUse" x1="838.8" x2="1081.6" y1="0" y2="0"><stop offset="0.000" stop-color="#00ffbd"/><stop offset="0.083" stop-color="#03ffb8"/><stop offset="0.132" stop-color="#21ffb5"/><stop offset="0.190" stop-color="#5affb0"/><stop offset="0.248" stop-color="#abffac"/><stop offset="0.289" stop-color="#f5ffa8"/><stop offset="0.298" stop-color="#fff9a3"/><stop offset="0.331" stop-color="#ffc27d"/><stop offset="0.380" stop-color="#ff8b57"/><stop offset="0.446" stop-color="#ff5e37"/><stop offset="0.545" stop-color="#ff361c"/><stop offset="0.694" stop-color="#ff1909"/><stop offset="0.959" stop-color="#ff0400"/><stop offset="1.000" stop-color="#ff0200"/></linearGradient><linearGradient id="b45" gradientUnits="userSpaceOnUse" x1="838.1" x2="1086.3" y1="0" y2="0"><stop offset="0.000" stop-color="#00ffcb"/><stop offset="0.081" stop-color="#04ffc7"/><stop offset="0.129" stop-color="#23ffc4"/><stop offset="0.185" stop-color="#5fffc1"/><stop offset="0.234" stop-color="#a6ffbe"/><stop offset="0.282" stop-color="#fffcb8"/><stop offset="0.315" stop-color="#ffc48d"/><stop offset="0.355" stop-color="#ff9368"/><stop offset="0.411" stop-color="#ff6646"/><stop offset="0.492" stop-color="#ff4029"/><stop offset="0.621" stop-color="#ff1f11"/><stop offset="0.839" stop-color="#ff0802"/><stop offset="1.000" stop-color="#ff0100"/></linearGradient><linearGradient id="b46" gradientUnits="userSpaceOnUse" x1="837.3" x2="1090.9" y1="0" y2="0"><stop offset="0.000" stop-color="#00ffda"/><stop offset="0.071" stop-color="#02ffd7"/><stop offset="0.119" stop-color="#20ffd5"/><stop offset="0.167" stop-color="#52ffd3"/><stop offset="0.214" stop-color="#97ffd1"/><stop offset="0.262" stop-color="#f1ffce"/><stop offset="0.270" stop-color="#fffbcb"/><stop offset="0.302" stop-color="#ffc29b"/><stop offset="0.341" stop-color="#ff9072"/><stop offset="0.397" stop-color="#ff634d"/><stop offset="0.476" stop-color="#ff3d2d"/><stop offset="0.603" stop-color="#ff1d14"/><stop offset="0.817" stop-color="#ff0703"/><stop offset="1.000" stop-color="#ff0000"/></linearGradient><linearGradient id="b47" gradientUnits="userSpaceOnUse" x1="836.6" x2="1095.5" y1="0" y2="0"><stop offset="0.000" stop-color="#00ffea"/><stop offset="0.070" stop-color="#02ffe9"/><stop offset="0.116" stop-color="#22ffe7"/><stop offset="0.163" stop-color="#57ffe6"/><stop offset="0.209" stop-color="#a0ffe5"/><stop offset="0.256" stop-color="#ffffe4"/><stop offset="0.287" stop-color="#ffc3ad"/><stop offset="0.326" stop-color="#ff907f"/><stop offset="0.380" stop-color="#ff6356"/><stop offset="0.457" stop-color="#ff3c33"/><stop offset="0.581" stop-color="#ff1c17"/><stop offset="0.791" stop-color="#ff0604"/><stop offset="1.000" stop-color="#ff0000"/></linearGradient><linearGradient id="b48" gradientUnits="userSpaceOnUse" x1="835.8" x2="1100.1" y1="0" y2="0"><stop offset="0.000" stop-color="#00fffb"/><stop offset="0.068" stop-color="#03fffb"/><stop offset="0.114" stop-color="#25fffb"/><stop offset="0.159" stop-color="#5cfffb"/><stop offset="0.205" stop-color="#a9fffb"/><stop offset="0.242" stop-color="#fbfffb"/><stop offset="0.273" stop-color="#ffc5c2"/><stop offset="0.311" stop-color="#ff908e"/><stop offset="0.364" stop-color="#ff6260"/><stop offset="0.439" stop-color="#ff3b3a"/><stop offset="0.561" stop-color="#ff1b1a"/><stop offset="0.765" stop-color="#ff0505"/><stop offset="1.000" stop-color="#ff0000"/></linearGradient><linearGradient id="b49" gradientUnits="userSpaceOnUse" x1="835.1" x2="1104.1" y1="0" y2="0"><stop offset="0.000" stop-color="#00f1ff"/><stop offset="0.067" stop-color="#04f0ff"/><stop offset="0.112" stop-color="#26efff"/><stop offset="0.157" stop-color="#5dedff"/><stop offset="0.201" stop-color="#a8ecff"/><stop offset="0.239" stop-color="#f8ebff"/><stop offset="0.246" stop-color="#ffe1f4"/><stop offset="0.276" stop-color="#ffacbb"/><stop offset="0.313" stop-color="#ff7e8b"/><stop offset="0.366" stop-color="#ff565f"/><stop offset="0.440" stop-color="#ff333a"/><stop offset="0.560" stop-color="#ff171b"/><stop offset="0.769" stop-color="#ff0305"/><stop offset="1.000" stop-color="#ff0000"/></linearGradient><linearGradient id="b50" gradientUnits="userSpaceOnUse" x1="834.3" x2="1103.0" y1="0" y2="0"><stop offset="0.000" stop-color="#00e0ff"/><stop offset="0.060" stop-color="#01deff"/><stop offset="0.097" stop-color="#18dcff"/><stop offset="0.142" stop-color="#47daff"/><stop offset="0.187" stop-color="#88d8ff"/><stop offset="0.231" stop-color="#dfd5ff"/><stop offset="0.246" stop-color="#ffd3fd"/><stop offset="0.276" stop-color="#ffa1c3"/><stop offset="0.313" stop-color="#ff7691"/><stop offset="0.366" stop-color="#ff5064"/><stop offset="0.440" stop-color="#ff2f3d"/><stop offset="0.560" stop-color="#ff141d"/><stop offset="0.761" stop-color="#ff0307"/><stop offset="1.000" stop-color="#ff0000"/></linearGradient><linearGradient id="b51" gradientUnits="userSpaceOnUse" x1="833.6" x2="1094.6" y1="0" y2="0"><stop offset="0.000" stop-color="#00d0ff"/><stop offset="0.062" stop-color="#01cdff"/><stop offset="0.108" stop-color="#1fcbff"/><stop offset="0.162" stop-color="#59c7ff"/><stop offset="0.208" stop-color="#9fc4ff"/><stop offset="0.254" stop-color="#fac0ff"/><stop offset="0.269" stop-color="#ffabe4"/><stop offset="0.308" stop-color="#ff7ca8"/><stop offset="0.354" stop-color="#ff5779"/><stop offset="0.423" stop-color="#ff354e"/><stop offset="0.523" stop-color="#ff1b2b"/><stop offset="0.685" stop-color="#ff0710"/><stop offset="0.969" stop-color="#ff0000"/><stop offset="1.000" stop-color="#ff0000"/></linearGradient><linearGradient id="b52" gradientUnits="userSpaceOnUse" x1="832.8" x2="1086.2" y1="0" y2="0"><stop offset="0.000" stop-color="#00c2ff"/><stop offset="0.063" stop-color="#02beff"/><stop offset="0.111" stop-color="#1fbaff"/><stop offset="0.167" stop-color="#58b6ff"/><stop offset="0.214" stop-color="#9cb2ff"/><stop offset="0.262" stop-color="#f3aeff"/><stop offset="0.270" stop-color="#ffaafb"/><stop offset="0.302" stop-color="#ff82c3"/><stop offset="0.341" stop-color="#ff5f93"/><stop offset="0.397" stop-color="#ff4067"/><stop offset="0.476" stop-color="#ff2541"/><stop offset="0.603" stop-color="#ff0f20"/><stop offset="0.817" stop-color="#ff0108"/><stop offset="1.000" stop-color="#ff0001"/></linearGradient><linearGradient id="b53" gradientUnits="userSpaceOnUse" x1="832.0" x2="1077.8" y1="0" y2="0"><stop offset="0.000" stop-color="#00b4ff"/><stop offset="0.066" stop-color="#02afff"/><stop offset="0.115" stop-color="#1fabff"/><stop offset="0.172" stop-color="#57a7ff"/><stop offset="0.230" stop-color="#a5a1ff"/><stop offset="0.279" stop-color="#fd9cff"/><stop offset="0.320" stop-color="#ff70be"/><stop offset="0.369" stop-color="#ff4e89"/><stop offset="0.434" stop-color="#ff315d"/><stop offset="0.533" stop-color="#ff1936"/><stop offset="0.689" stop-color="#ff0718"/><stop offset="0.959" stop-color="#ff0004"/><stop offset="1.000" stop-color="#ff0002"/></linearGradient><linearGradient id="b54" gradientUnits="userSpaceOnUse" x1="831.3" x2="1069.4" y1="0" y2="0"><stop offset="0.000" stop-color="#00a7ff"/><stop offset="0.067" stop-color="#03a2ff"/><stop offset="0.118" stop-color="#1f9eff"/><stop offset="0.176" stop-color="#5498ff"/><stop offset="0.235" stop-color="#9f92ff"/><stop offset="0.294" stop-color="#ff8afd"/><stop offset="0.328" stop-color="#ff6ac7"/><stop offset="0.378" stop-color="#ff4991"/><stop offset="0.445" stop-color="#ff2d62"/><stop offset="0.546" stop-color="#ff163a"/><stop offset="0.697" stop-color="#ff061b"/><stop offset="0.958" stop-color="#ff0006"/><stop offset="1.000" stop-color="#ff0004"/></linearGradient><linearGradient id="b55" gradientUnits="userSpaceOnUse" x1="830.5" x2="1061.0" y1="0" y2="0"><stop offset="0.000" stop-color="#009bff"/><stop offset="0.070" stop-color="#0395ff"/><stop offset="0.130" stop-color="#2590ff"/><stop offset="0.191" stop-color="#5c8aff"/><stop offset="0.252" stop-color="#a883ff"/><stop offset="0.304" stop-color="#fb7dff"/><stop offset="0.330" stop-color="#ff67d9"/><stop offset="0.374" stop-color="#ff4ba5"/><stop offset="0.435" stop-color="#ff3175"/><stop offset="0.522" stop-color="#ff1b4b"/><stop offset="0.652" stop-color="#ff0a28"/><stop offset="0.870" stop-color="#ff000e"/><stop offset="1.000" stop-color="#ff0006"/></linearGradient><linearGradient id="b56" gradientUnits="userSpaceOnUse" x1="829.8" x2="1052.6" y1="0" y2="0"><stop offset="0.000" stop-color="#008fff"/><stop offset="0.072" stop-color="#0489ff"/><stop offset="0.135" stop-color="#2584ff"/><stop offset="0.198" stop-color="#5b7dff"/><stop offset="0.261" stop-color="#a476ff"/><stop offset="0.315" stop-color="#f56fff"/><stop offset="0.324" stop-color="#ff6cfa"/><stop offset="0.369" stop-color="#ff4dbd"/><stop offset="0.423" stop-color="#ff358c"/><stop offset="0.505" stop-color="#ff1e5d"/><stop offset="0.622" stop-color="#ff0c36"/><stop offset="0.802" stop-color="#ff0118"/><stop offset="1.000" stop-color="#ff0009"/></linearGradient><linearGradient id="b57" gradientUnits="userSpaceOnUse" x1="829.0" x2="1044.2" y1="0" y2="0"><stop offset="0.000" stop-color="#0085ff"/><stop offset="0.065" stop-color="#027fff"/><stop offset="0.131" stop-color="#2079ff"/><stop offset="0.206" stop-color="#5a71ff"/><stop offset="0.271" stop-color="#a16aff"/><stop offset="0.336" stop-color="#fe62ff"/><stop offset="0.383" stop-color="#ff46c2"/><stop offset="0.439" stop-color="#ff2f90"/><stop offset="0.523" stop-color="#ff1a60"/><stop offset="0.645" stop-color="#ff0a38"/><stop offset="0.832" stop-color="#ff001a"/><stop offset="1.000" stop-color="#ff000c"/></linearGradient><linearGradient id="b58" gradientUnits="userSpaceOnUse" x1="828.3" x2="1035.8" y1="0" y2="0"><stop offset="0.000" stop-color="#007bff"/><stop offset="0.068" stop-color="#0275ff"/><stop offset="0.136" stop-color="#206fff"/><stop offset="0.214" stop-color="#5967ff"/><stop offset="0.282" stop-color="#9e5fff"/><stop offset="0.350" stop-color="#f857ff"/><stop offset="0.359" stop-color="#ff53f8"/><stop offset="0.408" stop-color="#ff3bbd"/><stop offset="0.476" stop-color="#ff2487"/><stop offset="0.563" stop-color="#ff145b"/><stop offset="0.699" stop-color="#ff0634"/><stop offset="0.913" stop-color="#ff0016"/><stop offset="1.000" stop-color="#ff000f"/></linearGradient><linearGradient id="b59" gradientUnits="userSpaceOnUse" x1="827.5" x2="1027.4" y1="0" y2="0"><stop offset="0.000" stop-color="#0071ff"/><stop offset="0.071" stop-color="#026bff"/><stop offset="0.141" stop-color="#2065ff"/><stop offset="0.222" stop-color="#585dff"/><stop offset="0.303" stop-color="#a754ff"/><stop offset="0.374" stop-color="#ff4afd"/><stop offset="0.424" stop-color="#ff34c2"/><stop offset="0.495" stop-color="#ff208b"/><stop offset="0.586" stop-color="#ff105e"/><stop offset="0.717" stop-color="#ff0539"/><stop offset="0.929" stop-color="#ff001a"/><stop offset="1.000" stop-color="#ff0013"/></linearGradient><linearGradient id="b60" gradientUnits="userSpaceOnUse" x1="826.8" x2="1019.0" y1="0" y2="0"><stop offset="0.000" stop-color="#0068ff"/><stop offset="0.073" stop-color="#0362ff"/><stop offset="0.146" stop-color="#205cff"/><stop offset="0.229" stop-color="#5553ff"/><stop offset="0.312" stop-color="#a14aff"/><stop offset="0.385" stop-color="#f642ff"/><stop offset="0.396" stop-color="#ff3ffa"/><stop offset="0.448" stop-color="#ff2cc2"/><stop offset="0.521" stop-color="#ff1a8c"/><stop offset="0.615" stop-color="#ff0d60"/><stop offset="0.760" stop-color="#ff0338"/><stop offset="0.990" stop-color="#ff0019"/><stop offset="1.000" stop-color="#ff0018"/></linearGradient><linearGradient id="b61" gradientUnits="userSpaceOnUse" x1="826.0" x2="1010.6" y1="0" y2="0"><stop offset="0.000" stop-color="#0060ff"/><stop offset="0.076" stop-color="#035aff"/><stop offset="0.163" stop-color="#2552ff"/><stop offset="0.250" stop-color="#5d4aff"/><stop offset="0.337" stop-color="#a940ff"/><stop offset="0.413" stop-color="#fe38ff"/><stop offset="0.467" stop-color="#ff26c6"/><stop offset="0.543" stop-color="#ff1690"/><stop offset="0.641" stop-color="#ff0a63"/><stop offset="0.783" stop-color="#ff023d"/><stop offset="1.000" stop-color="#ff001e"/></linearGradient><linearGradient id="b62" gradientUnits="userSpaceOnUse" x1="825.3" x2="1002.2" y1="0" y2="0"><stop offset="0.000" stop-color="#0058ff"/><stop offset="0.080" stop-color="#0452ff"/><stop offset="0.170" stop-color="#254aff"/><stop offset="0.273" stop-color="#6440ff"/><stop offset="0.364" stop-color="#b137ff"/><stop offset="0.432" stop-color="#f930ff"/><stop offset="0.455" stop-color="#ff2aeb"/><stop offset="0.523" stop-color="#ff1ab0"/><stop offset="0.614" stop-color="#ff0d7d"/><stop offset="0.739" stop-color="#ff0451"/><stop offset="0.920" stop-color="#ff002e"/><stop offset="1.000" stop-color="#ff0024"/></linearGradient><linearGradient id="b63" gradientUnits="userSpaceOnUse" x1="824.5" x2="993.8" y1="0" y2="0"><stop offset="0.000" stop-color="#0051ff"/><stop offset="0.083" stop-color="#044aff"/><stop offset="0.179" stop-color="#2642ff"/><stop offset="0.286" stop-color="#6339ff"/><stop offset="0.381" stop-color="#ae30ff"/><stop offset="0.464" stop-color="#ff27fd"/><stop offset="0.524" stop-color="#ff1ac6"/><stop offset="0.607" stop-color="#ff0e91"/><stop offset="0.726" stop-color="#ff0461"/><stop offset="0.893" stop-color="#ff003b"/><stop offset="1.000" stop-color="#ff002b"/></linearGradient><linearGradient id="b64" gradientUnits="userSpaceOnUse" x1="823.8" x2="985.4" y1="0" y2="0"><stop offset="0.000" stop-color="#004aff"/><stop offset="0.087" stop-color="#0543ff"/><stop offset="0.188" stop-color="#263bff"/><stop offset="0.300" stop-color="#6232ff"/><stop offset="0.400" stop-color="#ab29ff"/><stop offset="0.487" stop-color="#fc21ff"/><stop offset="0.575" stop-color="#ff11b8"/><stop offset="0.675" stop-color="#ff0783"/><stop offset="0.812" stop-color="#ff0156"/><stop offset="1.000" stop-color="#ff0033"/></linearGradient><linearGradient id="b65" gradientUnits="userSpaceOnUse" x1="823.0" x2="977.0" y1="0" y2="0"><stop offset="0.000" stop-color="#0043ff"/><stop offset="0.091" stop-color="#053dff"/><stop offset="0.208" stop-color="#2a34ff"/><stop offset="0.325" stop-color="#662bff"/><stop offset="0.442" stop-color="#b921ff"/><stop offset="0.519" stop-color="#fe1aff"/><stop offset="0.597" stop-color="#ff0fc1"/><stop offset="0.701" stop-color="#ff058a"/><stop offset="0.844" stop-color="#ff005b"/><stop offset="1.000" stop-color="#ff003c"/></linearGradient><linearGradient id="b66" gradientUnits="userSpaceOnUse" x1="822.3" x2="968.6" y1="0" y2="0"><stop offset="0.000" stop-color="#003dff"/><stop offset="0.096" stop-color="#0537ff"/><stop offset="0.219" stop-color="#2a2eff"/><stop offset="0.342" stop-color="#6525ff"/><stop offset="0.466" stop-color="#b61bff"/><stop offset="0.548" stop-color="#f915ff"/><stop offset="0.575" stop-color="#ff11ed"/><stop offset="0.658" stop-color="#ff09b5"/><stop offset="0.767" stop-color="#ff0283"/><stop offset="0.918" stop-color="#ff0058"/><stop offset="1.000" stop-color="#ff0047"/></linearGradient><linearGradient id="b67" gradientUnits="userSpaceOnUse" x1="821.5" x2="960.2" y1="0" y2="0"><stop offset="0.000" stop-color="#0037ff"/><stop offset="0.087" stop-color="#0332ff"/><stop offset="0.217" stop-color="#2529ff"/><stop offset="0.348" stop-color="#5d20ff"/><stop offset="0.478" stop-color="#a917ff"/><stop offset="0.594" stop-color="#ff0ffd"/><stop offset="0.681" stop-color="#ff07c1"/><stop offset="0.797" stop-color="#ff018b"/><stop offset="0.957" stop-color="#ff005d"/><stop offset="1.000" stop-color="#ff0054"/></linearGradient><linearGradient id="b68" gradientUnits="userSpaceOnUse" x1="820.8" x2="951.8" y1="0" y2="0"><stop offset="0.000" stop-color="#0032ff"/><stop offset="0.092" stop-color="#042cff"/><stop offset="0.231" stop-color="#2624ff"/><stop offset="0.385" stop-color="#641aff"/><stop offset="0.523" stop-color="#b111ff"/><stop offset="0.631" stop-color="#fd0bff"/><stop offset="0.738" stop-color="#ff03bc"/><stop offset="0.862" stop-color="#ff0089"/><stop offset="1.000" stop-color="#ff0063"/></linearGradient><linearGradient id="b69" gradientUnits="userSpaceOnUse" x1="820.0" x2="943.4" y1="0" y2="0"><stop offset="0.000" stop-color="#002cff"/><stop offset="0.098" stop-color="#0427ff"/><stop offset="0.246" stop-color="#261fff"/><stop offset="0.410" stop-color="#6316ff"/><stop offset="0.557" stop-color="#af0dff"/><stop offset="0.672" stop-color="#f907ff"/><stop offset="0.705" stop-color="#ff05ee"/><stop offset="0.803" stop-color="#ff01b8"/><stop offset="0.934" stop-color="#ff0087"/><stop offset="1.000" stop-color="#ff0074"/></linearGradient><linearGradient id="b70" gradientUnits="userSpaceOnUse" x1="819.3" x2="935.0" y1="0" y2="0"><stop offset="0.000" stop-color="#0028ff"/><stop offset="0.105" stop-color="#0422ff"/><stop offset="0.263" stop-color="#261aff"/><stop offset="0.439" stop-color="#6211ff"/><stop offset="0.596" stop-color="#ad09ff"/><stop offset="0.737" stop-color="#ff03fd"/><stop offset="0.842" stop-color="#ff00c3"/><stop offset="0.982" stop-color="#ff008e"/><stop offset="1.000" stop-color="#ff0089"/></linearGradient><linearGradient id="b71" gradientUnits="userSpaceOnUse" x1="818.5" x2="926.6" y1="0" y2="0"><stop offset="0.000" stop-color="#0023ff"/><stop offset="0.111" stop-color="#051eff"/><stop offset="0.278" stop-color="#2516ff"/><stop offset="0.463" stop-color="#5f0eff"/><stop offset="0.648" stop-color="#ae06ff"/><stop offset="0.796" stop-color="#ff01fd"/><stop offset="0.907" stop-color="#ff00c5"/><stop offset="1.000" stop-color="#ff00a2"/></linearGradient><linearGradient id="b72" gradientUnits="userSpaceOnUse" x1="817.8" x2="918.2" y1="0" y2="0"><stop offset="0.000" stop-color="#001fff"/><stop offset="0.120" stop-color="#051aff"/><stop offset="0.320" stop-color="#2a12ff"/><stop offset="0.520" stop-color="#650aff"/><stop offset="0.720" stop-color="#b603ff"/><stop offset="0.860" stop-color="#fd00ff"/><stop offset="1.000" stop-color="#ff00c0"/></linearGradient><linearGradient id="b73" gradientUnits="userSpaceOnUse" x1="817.0" x2="909.8" y1="0" y2="0"><stop offset="0.000" stop-color="#001bff"/><stop offset="0.130" stop-color="#0516ff"/><stop offset="0.348" stop-color="#2a0eff"/><stop offset="0.565" stop-color="#6407ff"/><stop offset="0.783" stop-color="#b401ff"/><stop offset="0.935" stop-color="#fa00ff"/><stop offset="0.978" stop-color="#ff00ef"/><stop offset="1.000" stop-color="#ff00e5"/></linearGradient><linearGradient id="b74" gradientUnits="userSpaceOnUse" x1="816.2" x2="901.4" y1="0" y2="0"><stop offset="0.000" stop-color="#0017ff"/><stop offset="0.143" stop-color="#0613ff"/><stop offset="0.381" stop-color="#2a0bff"/><stop offset="0.643" stop-color="#6b04ff"/><stop offset="0.881" stop-color="#bb00ff"/><stop offset="1.000" stop-color="#ed00ff"/></linearGradient><linearGradient id="b75" gradientUnits="userSpaceOnUse" x1="815.5" x2="893.0" y1="0" y2="0"><stop offset="0.000" stop-color="#0014ff"/><stop offset="0.158" stop-color="#060fff"/><stop offset="0.421" stop-color="#2b08ff"/><stop offset="0.711" stop-color="#6b02ff"/><stop offset="0.974" stop-color="#ba00ff"/><stop offset="1.000" stop-color="#c300ff"/></linearGradient><linearGradient id="b76" gradientUnits="userSpaceOnUse" x1="814.7" x2="884.6" y1="0" y2="0"><stop offset="0.000" stop-color="#0011ff"/><stop offset="0.176" stop-color="#070cff"/><stop offset="0.471" stop-color="#2b06ff"/><stop offset="0.794" stop-color="#6b00ff"/><stop offset="1.000" stop-color="#a000ff"/></linearGradient><linearGradient id="b77" gradientUnits="userSpaceOnUse" x1="814.0" x2="876.2" y1="0" y2="0"><stop offset="0.000" stop-color="#000eff"/><stop offset="0.194" stop-color="#070aff"/><stop offset="0.548" stop-color="#2e03ff"/><stop offset="0.903" stop-color="#6c00ff"/><stop offset="1.000" stop-color="#8000ff"/></linearGradient><linearGradient id="b78" gradientUnits="userSpaceOnUse" x1="813.2" x2="867.8" y1="0" y2="0"><stop offset="0.000" stop-color="#000bff"/><stop offset="0.259" stop-color="#0a07ff"/><stop offset="0.667" stop-color="#3301ff"/><stop offset="1.000" stop-color="#6500ff"/></linearGradient><linearGradient id="b79" gradientUnits="userSpaceOnUse" x1="812.5" x2="859.4" y1="0" y2="0"><stop offset="0.000" stop-color="#0009ff"/><stop offset="0.304" stop-color="#0a05ff"/><stop offset="0.783" stop-color="#3400ff"/><stop offset="1.000" stop-color="#4e00ff"/></linearGradient><linearGradient id="b80" gradientUnits="userSpaceOnUse" x1="811.7" x2="851.0" y1="0" y2="0"><stop offset="0.000" stop-color="#0006ff"/><stop offset="0.368" stop-color="#0b03ff"/><stop offset="0.947" stop-color="#3500ff"/><stop offset="1.000" stop-color="#3900ff"/></linearGradient><linearGradient id="b81" gradientUnits="userSpaceOnUse" x1="811.0" x2="842.6" y1="0" y2="0"><stop offset="0.000" stop-color="#0004ff"/><stop offset="0.467" stop-color="#0b01ff"/><stop offset="1.000" stop-color="#2800ff"/></linearGradient><linearGradient id="b82" gradientUnits="userSpaceOnUse" x1="810.2" x2="834.2" y1="0" y2="0"><stop offset="0.000" stop-color="#0003ff"/><stop offset="0.636" stop-color="#0c00ff"/><stop offset="1.000" stop-color="#1a00ff"/></linearGradient><linearGradient id="b83" gradientUnits="userSpaceOnUse" x1="809.5" x2="825.8" y1="0" y2="0"><stop offset="0.000" stop-color="#0001ff"/><stop offset="1.000" stop-color="#0e00ff"/></linearGradient><linearGradient id="b84" gradientUnits="userSpaceOnUse" x1="808.9" x2="817.4" y1="0" y2="0"><stop offset="0.000" stop-color="#0000ff"/><stop offset="1.000" stop-color="#0500ff"/></linearGradient><linearGradient id="c0" gradientUnits="userSpaceOnUse" x1="1022.7" x2="1193.6" y1="0" y2="0"><stop offset="0.000" stop-color="#7bffc7"/><stop offset="0.643" stop-color="#e0ffc2"/><stop offset="0.810" stop-color="#ffffc1"/><stop offset="1.000" stop-color="#ffdfa7"/></linearGradient><linearGradient id="c1" gradientUnits="userSpaceOnUse" x1="1022.7" x2="1193.6" y1="0" y2="0"><stop offset="0.000" stop-color="#7cffc9"/><stop offset="0.643" stop-color="#e3ffc5"/><stop offset="0.810" stop-color="#fffdc2"/><stop offset="1.000" stop-color="#ffdda8"/></linearGradient><linearGradient id="c2" gradientUnits="userSpaceOnUse" x1="1022.7" x2="1193.6" y1="0" y2="0"><stop offset="0.000" stop-color="#7effcc"/><stop offset="0.643" stop-color="#e5ffc7"/><stop offset="0.786" stop-color="#ffffc6"/><stop offset="1.000" stop-color="#ffdaa8"/></linearGradient><linearGradient id="c3" gradientUnits="userSpaceOnUse" x1="1022.7" x2="1193.6" y1="0" y2="0"><stop offset="0.000" stop-color="#7fffce"/><stop offset="0.643" stop-color="#e8ffca"/><stop offset="0.786" stop-color="#fffcc6"/><stop offset="1.000" stop-color="#ffd8a9"/></linearGradient><linearGradient id="c4" gradientUnits="userSpaceOnUse" x1="1022.7" x2="1193.6" y1="0" y2="0"><stop offset="0.000" stop-color="#81ffd0"/><stop offset="0.643" stop-color="#eaffcc"/><stop offset="0.762" stop-color="#fffeca"/><stop offset="1.000" stop-color="#ffd6a9"/></linearGradient><linearGradient id="c5" gradientUnits="userSpaceOnUse" x1="1022.7" x2="1193.6" y1="0" y2="0"><stop offset="0.000" stop-color="#83ffd2"/><stop offset="0.619" stop-color="#e8ffcf"/><stop offset="0.738" stop-color="#ffffce"/><stop offset="1.000" stop-color="#ffd4aa"/></linearGradient><linearGradient id="c6" gradientUnits="userSpaceOnUse" x1="1022.7" x2="1193.6" y1="0" y2="0"><stop offset="0.000" stop-color="#84ffd5"/><stop offset="0.619" stop-color="#ebffd1"/><stop offset="0.738" stop-color="#fffdcf"/><stop offset="1.000" stop-color="#ffd2aa"/></linearGradient><linearGradient id="c7" gradientUnits="userSpaceOnUse" x1="1022.7" x2="1193.6" y1="0" y2="0"><stop offset="0.000" stop-color="#86ffd7"/><stop offset="0.619" stop-color="#edffd4"/><stop offset="0.714" stop-color="#ffffd3"/><stop offset="1.000" stop-color="#ffcfaa"/></linearGradient><linearGradient id="c8" gradientUnits="userSpaceOnUse" x1="1022.7" x2="1193.6" y1="0" y2="0"><stop offset="0.000" stop-color="#88ffda"/><stop offset="0.619" stop-color="#f0ffd7"/><stop offset="0.714" stop-color="#fffcd3"/><stop offset="1.000" stop-color="#ffcdab"/></linearGradient><linearGradient id="c9" gradientUnits="userSpaceOnUse" x1="1022.7" x2="1193.6" y1="0" y2="0"><stop offset="0.000" stop-color="#89ffdc"/><stop offset="0.619" stop-color="#f3ffd9"/><stop offset="0.690" stop-color="#fffed8"/><stop offset="1.000" stop-color="#ffcbab"/></linearGradient><linearGradient id="c10" gradientUnits="userSpaceOnUse" x1="1022.7" x2="1193.6" y1="0" y2="0"><stop offset="0.000" stop-color="#8bffdf"/><stop offset="0.619" stop-color="#f5ffdc"/><stop offset="0.690" stop-color="#fffbd8"/><stop offset="1.000" stop-color="#ffc9ac"/></linearGradient><linearGradient id="c11" gradientUnits="userSpaceOnUse" x1="1022.7" x2="1193.6" y1="0" y2="0"><stop offset="0.000" stop-color="#8dffe1"/><stop offset="0.595" stop-color="#f3ffdf"/><stop offset="0.667" stop-color="#fffddd"/><stop offset="1.000" stop-color="#ffc7ac"/></linearGradient><linearGradient id="c12" gradientUnits="userSpaceOnUse" x1="1022.7" x2="1193.6" y1="0" y2="0"><stop offset="0.000" stop-color="#8fffe4"/><stop offset="0.595" stop-color="#f6ffe2"/><stop offset="0.667" stop-color="#fffadd"/><stop offset="1.000" stop-color="#ffc5ad"/></linearGradient><linearGradient id="c13" gradientUnits="userSpaceOnUse" x1="1022.7" x2="1193.6" y1="0" y2="0"><stop offset="0.000" stop-color="#90ffe6"/><stop offset="0.595" stop-color="#f9ffe4"/><stop offset="0.667" stop-color="#fff7dd"/><stop offset="1.000" stop-color="#ffc3ad"/></linearGradient><linearGradient id="c14" gradientUnits="userSpaceOnUse" x1="1022.7" x2="1193.6" y1="0" y2="0"><stop offset="0.000" stop-color="#92ffe9"/><stop offset="0.619" stop-color="#fffee6"/><stop offset="0.976" stop-color="#ffc4b0"/><stop offset="1.000" stop-color="#ffc0ad"/></linearGradient><linearGradient id="c15" gradientUnits="userSpaceOnUse" x1="1022.7" x2="1193.6" y1="0" y2="0"><stop offset="0.000" stop-color="#94ffec"/><stop offset="0.595" stop-color="#feffea"/><stop offset="0.976" stop-color="#ffc1b1"/><stop offset="1.000" stop-color="#ffbeae"/></linearGradient><linearGradient id="c16" gradientUnits="userSpaceOnUse" x1="1022.7" x2="1193.6" y1="0" y2="0"><stop offset="0.000" stop-color="#96ffee"/><stop offset="0.595" stop-color="#fffdeb"/><stop offset="0.952" stop-color="#ffc3b4"/><stop offset="1.000" stop-color="#ffbcae"/></linearGradient><linearGradient id="c17" gradientUnits="userSpaceOnUse" x1="1022.7" x2="1193.6" y1="0" y2="0"><stop offset="0.000" stop-color="#98fff1"/><stop offset="0.571" stop-color="#fffff0"/><stop offset="0.929" stop-color="#ffc4b8"/><stop offset="1.000" stop-color="#ffbaaf"/></linearGradient><linearGradient id="c18" gradientUnits="userSpaceOnUse" x1="1022.7" x2="1193.6" y1="0" y2="0"><stop offset="0.000" stop-color="#9afff4"/><stop offset="0.571" stop-color="#fffcf0"/><stop offset="0.929" stop-color="#ffc1b8"/><stop offset="1.000" stop-color="#ffb8af"/></linearGradient><linearGradient id="c19" gradientUnits="userSpaceOnUse" x1="1022.7" x2="1193.6" y1="0" y2="0"><stop offset="0.000" stop-color="#9cfff6"/><stop offset="0.548" stop-color="#fffef5"/><stop offset="0.905" stop-color="#ffc3bb"/><stop offset="1.000" stop-color="#ffb6af"/></linearGradient><linearGradient id="c20" gradientUnits="userSpaceOnUse" x1="1022.7" x2="1193.6" y1="0" y2="0"><stop offset="0.000" stop-color="#9efff9"/><stop offset="0.524" stop-color="#fefff9"/><stop offset="0.905" stop-color="#ffc0bc"/><stop offset="1.000" stop-color="#ffb4b0"/></linearGradient><linearGradient id="c21" gradientUnits="userSpaceOnUse" x1="1022.7" x2="1193.6" y1="0" y2="0"><stop offset="0.000" stop-color="#a0fffc"/><stop offset="0.524" stop-color="#fffdfa"/><stop offset="0.881" stop-color="#ffc2bf"/><stop offset="1.000" stop-color="#ffb2b0"/></linearGradient><linearGradient id="c22" gradientUnits="userSpaceOnUse" x1="1022.7" x2="1193.6" y1="0" y2="0"><stop offset="0.000" stop-color="#a2ffff"/><stop offset="0.500" stop-color="#ffffff"/><stop offset="0.857" stop-color="#ffc3c3"/><stop offset="1.000" stop-color="#ffb0b1"/></linearGradient><linearGradient id="c23" gradientUnits="userSpaceOnUse" x1="1022.7" x2="1193.6" y1="0" y2="0"><stop offset="0.000" stop-color="#a2fcff"/><stop offset="0.500" stop-color="#fffcff"/><stop offset="0.857" stop-color="#ffc0c3"/><stop offset="1.000" stop-color="#ffaeb1"/></linearGradient><linearGradient id="c24" gradientUnits="userSpaceOnUse" x1="1022.7" x2="1193.6" y1="0" y2="0"><stop offset="0.000" stop-color="#a2f9ff"/><stop offset="0.500" stop-color="#fef8ff"/><stop offset="0.881" stop-color="#ffbbc0"/><stop offset="1.000" stop-color="#ffacb1"/></linearGradient><linearGradient id="c25" gradientUnits="userSpaceOnUse" x1="1022.7" x2="1193.6" y1="0" y2="0"><stop offset="0.000" stop-color="#a2f6ff"/><stop offset="0.500" stop-color="#fef5ff"/><stop offset="0.881" stop-color="#ffb9c1"/><stop offset="1.000" stop-color="#ffaab2"/></linearGradient><linearGradient id="c26" gradientUnits="userSpaceOnUse" x1="1022.7" x2="1193.6" y1="0" y2="0"><stop offset="0.000" stop-color="#a2f3ff"/><stop offset="0.500" stop-color="#fef2ff"/><stop offset="0.881" stop-color="#ffb7c1"/><stop offset="1.000" stop-color="#ffa8b2"/></linearGradient><linearGradient id="c27" gradientUnits="userSpaceOnUse" x1="1022.7" x2="1193.6" y1="0" y2="0"><stop offset="0.000" stop-color="#a3f1ff"/><stop offset="0.500" stop-color="#feefff"/><stop offset="0.905" stop-color="#ffb2be"/><stop offset="1.000" stop-color="#ffa7b3"/></linearGradient><linearGradient id="c28" gradientUnits="userSpaceOnUse" x1="1022.7" x2="1193.6" y1="0" y2="0"><stop offset="0.000" stop-color="#a3eeff"/><stop offset="0.500" stop-color="#feecff"/><stop offset="0.905" stop-color="#ffb0bf"/><stop offset="1.000" stop-color="#ffa5b3"/></linearGradient><linearGradient id="c29" gradientUnits="userSpaceOnUse" x1="1022.7" x2="1193.6" y1="0" y2="0"><stop offset="0.000" stop-color="#a3ebff"/><stop offset="0.524" stop-color="#ffe7fc"/><stop offset="0.881" stop-color="#ffb1c2"/><stop offset="1.000" stop-color="#ffa3b3"/></linearGradient><linearGradient id="c30" gradientUnits="userSpaceOnUse" x1="1022.7" x2="1193.6" y1="0" y2="0"><stop offset="0.000" stop-color="#a3e8ff"/><stop offset="0.524" stop-color="#ffe4fc"/><stop offset="0.881" stop-color="#ffafc3"/><stop offset="1.000" stop-color="#ffa1b4"/></linearGradient><linearGradient id="c31" gradientUnits="userSpaceOnUse" x1="1022.7" x2="1193.6" y1="0" y2="0"><stop offset="0.000" stop-color="#a3e6ff"/><stop offset="0.524" stop-color="#ffe1fc"/><stop offset="0.905" stop-color="#ffaac0"/><stop offset="1.000" stop-color="#ff9fb4"/></linearGradient><linearGradient id="c32" gradientUnits="userSpaceOnUse" x1="1022.7" x2="1193.6" y1="0" y2="0"><stop offset="0.000" stop-color="#a3e3ff"/><stop offset="0.524" stop-color="#ffdffd"/><stop offset="0.905" stop-color="#ffa8c0"/><stop offset="1.000" stop-color="#ff9db4"/></linearGradient><linearGradient id="c33" gradientUnits="userSpaceOnUse" x1="1022.7" x2="1193.6" y1="0" y2="0"><stop offset="0.000" stop-color="#a4e0ff"/><stop offset="0.524" stop-color="#ffdcfd"/><stop offset="0.905" stop-color="#ffa6c1"/><stop offset="1.000" stop-color="#ff9bb5"/></linearGradient><linearGradient id="c34" gradientUnits="userSpaceOnUse" x1="1022.7" x2="1193.6" y1="0" y2="0"><stop offset="0.000" stop-color="#a4deff"/><stop offset="0.524" stop-color="#ffd9fd"/><stop offset="0.905" stop-color="#ffa4c1"/><stop offset="1.000" stop-color="#ff9ab5"/></linearGradient><linearGradient id="c35" gradientUnits="userSpaceOnUse" x1="1022.7" x2="1193.6" y1="0" y2="0"><stop offset="0.000" stop-color="#a4dbff"/><stop offset="0.524" stop-color="#ffd7fd"/><stop offset="0.905" stop-color="#ffa2c1"/><stop offset="1.000" stop-color="#ff98b6"/></linearGradient><linearGradient id="c36" gradientUnits="userSpaceOnUse" x1="1022.7" x2="1193.6" y1="0" y2="0"><stop offset="0.000" stop-color="#a4d9ff"/><stop offset="0.524" stop-color="#ffd4fd"/><stop offset="0.905" stop-color="#ffa0c2"/><stop offset="1.000" stop-color="#ff96b6"/></linearGradient><linearGradient id="c37" gradientUnits="userSpaceOnUse" x1="1022.7" x2="1193.6" y1="0" y2="0"><stop offset="0.000" stop-color="#a4d6ff"/><stop offset="0.524" stop-color="#ffd2fe"/><stop offset="0.905" stop-color="#ff9ec2"/><stop offset="1.000" stop-color="#ff94b6"/></linearGradient><linearGradient id="c38" gradientUnits="userSpaceOnUse" x1="1022.7" x2="1193.6" y1="0" y2="0"><stop offset="0.000" stop-color="#a4d3ff"/><stop offset="0.524" stop-color="#ffcffe"/><stop offset="0.905" stop-color="#ff9cc2"/><stop offset="1.000" stop-color="#ff92b7"/></linearGradient><linearGradient id="c39" gradientUnits="userSpaceOnUse" x1="1022.7" x2="1193.6" y1="0" y2="0"><stop offset="0.000" stop-color="#a5d1ff"/><stop offset="0.524" stop-color="#ffcdfe"/><stop offset="0.905" stop-color="#ff9bc3"/><stop offset="1.000" stop-color="#ff91b7"/></linearGradient><linearGradient id="c40" gradientUnits="userSpaceOnUse" x1="1022.7" x2="1193.6" y1="0" y2="0"><stop offset="0.000" stop-color="#a5ceff"/><stop offset="0.524" stop-color="#ffcafe"/><stop offset="0.905" stop-color="#ff99c3"/><stop offset="1.000" stop-color="#ff8fb7"/></linearGradient><linearGradient id="c41" gradientUnits="userSpaceOnUse" x1="1022.7" x2="1193.6" y1="0" y2="0"><stop offset="0.000" stop-color="#a5ccff"/><stop offset="0.524" stop-color="#ffc8ff"/><stop offset="0.905" stop-color="#ff97c3"/><stop offset="1.000" stop-color="#ff8db8"/></linearGradient><linearGradient id="c42" gradientUnits="userSpaceOnUse" x1="1022.7" x2="1193.6" y1="0" y2="0"><stop offset="0.000" stop-color="#a5caff"/><stop offset="0.524" stop-color="#ffc5ff"/><stop offset="0.905" stop-color="#ff95c4"/><stop offset="1.000" stop-color="#ff8bb8"/></linearGradient><linearGradient id="c43" gradientUnits="userSpaceOnUse" x1="1022.7" x2="1193.6" y1="0" y2="0"><stop offset="0.000" stop-color="#a5c7ff"/><stop offset="0.524" stop-color="#ffc3ff"/><stop offset="0.905" stop-color="#ff93c4"/><stop offset="1.000" stop-color="#ff8ab8"/></linearGradient><linearGradient id="c44" gradientUnits="userSpaceOnUse" x1="1022.7" x2="1193.6" y1="0" y2="0"><stop offset="0.000" stop-color="#a5c5ff"/><stop offset="0.524" stop-color="#ffc1ff"/><stop offset="0.905" stop-color="#ff92c4"/><stop offset="1.000" stop-color="#ff88b9"/></linearGradient><clipPath id="ic"><rect x="1026.7" y="29.8" width="162.9" height="122.5"/></clipPath><linearGradient id="th" x1="0" y1="0" x2="0" y2="1"><stop offset="0" stop-color="#343434"/><stop offset="0.47" stop-color="#2e2e2e"/><stop offset="0.53" stop-color="#161616"/><stop offset="1" stop-color="#1b1b1b"/></linearGradient><clipPath id="tc"><rect x="701" y="391" width="480.1" height="138.3"/></clipPath></defs>
<rect width="1200" height="539" fill="#333"/>
<rect x="0" y="0" width="1.6" height="539" fill="#3b3b3b"/><text x="18" y="35.5" font-size="25.2" textLength="126" lengthAdjust="spacingAndGlyphs" fill="#efefef">Colorspace</text><rect x="28" y="79" width="190" height="305" fill="#252525"/><text x="116" y="75" font-size="10" text-anchor="middle" fill="#dcdcdc">RGB Balance</text><line x1="25" y1="79.5" x2="217.5" y2="79.5" stroke="#8c8c8c" stroke-width="1"/><text x="24" y="83.1" font-size="10" text-anchor="end" fill="#dcdcdc">8</text><line x1="25" y1="117.5" x2="217.5" y2="117.5" stroke="#7a7a7a" stroke-width="1"/><text x="24" y="121.1" font-size="10" text-anchor="end" fill="#dcdcdc">6</text><line x1="25" y1="155.5" x2="217.5" y2="155.5" stroke="#7a7a7a" stroke-width="1"/><text x="24" y="159.1" font-size="10" text-anchor="end" fill="#dcdcdc">4</text><line x1="25" y1="193.5" x2="217.5" y2="193.5" stroke="#7a7a7a" stroke-width="1"/><text x="24" y="197.1" font-size="10" text-anchor="end" fill="#dcdcdc">2</text><line x1="25" y1="232.0" x2="217.5" y2="232.0" stroke="#7a7a7a" stroke-width="1"/><text x="24" y="235.6" font-size="10" text-anchor="end" fill="#dcdcdc">0</text><line x1="25" y1="269.5" x2="217.5" y2="269.5" stroke="#7a7a7a" stroke-width="1"/><text x="24" y="273.1" font-size="10" text-anchor="end" fill="#dcdcdc">-2</text><line x1="25" y1="307.5" x2="217.5" y2="307.5" stroke="#7a7a7a" stroke-width="1"/><text x="24" y="311.1" font-size="10" text-anchor="end" fill="#dcdcdc">-4</text><line x1="25" y1="345.5" x2="217.5" y2="345.5" stroke="#7a7a7a" stroke-width="1"/><text x="24" y="349.1" font-size="10" text-anchor="end" fill="#dcdcdc">-6</text><line x1="25" y1="383.5" x2="217.5" y2="383.5" stroke="#8c8c8c" stroke-width="1"/><text x="24" y="387.1" font-size="10" text-anchor="end" fill="#dcdcdc">-8</text><line x1="28.5" y1="79" x2="28.5" y2="387" stroke="#8c8c8c" stroke-width="1"/><line x1="217.5" y1="79" x2="217.5" y2="387" stroke="#8c8c8c" stroke-width="1"/><rect x="47.5" y="232.5" width="48.5" height="82.5" fill="url(#g1)" stroke="#000" stroke-opacity="0.8" stroke-width="1"/><rect x="97.5" y="218.5" width="48.5" height="13" fill="url(#g2)" stroke="#000" stroke-opacity="0.8" stroke-width="1"/><rect x="147" y="105.5" width="48.5" height="126" fill="url(#g3)" stroke="#000" stroke-opacity="0.8" stroke-width="1"/><text x="122.5" y="394" font-size="10" text-anchor="middle" fill="#dcdcdc">White</text><text x="11" y="416.8" font-size="19.7" textLength="157" lengthAdjust="spacingAndGlyphs" fill="#efefef">Current Reading</text><text x="11" y="444.7" font-size="15.3" textLength="73.3" lengthAdjust="spacingAndGlyphs" fill="#efefef">x: 0.3054</text><text x="11" y="472" font-size="15.3" textLength="73.3" lengthAdjust="spacingAndGlyphs" fill="#efefef">y: 0.3231</text><text x="11" y="498.8" font-size="15.3" textLength="79" lengthAdjust="spacingAndGlyphs" fill="#efefef">fL: 46.812</text><text x="11" y="526" font-size="15.3" textLength="114" lengthAdjust="spacingAndGlyphs" fill="#efefef">cd/m²: 160.39</text><rect x="284.4" y="29.5" width="99.19999999999999" height="215.0" fill="#252525"/><text x="324.2" y="26.2" font-size="10" text-anchor="middle" fill="#dcdcdc">DeltaL</text><text x="279.7" y="33.3" font-size="9.7" text-anchor="end" fill="#dcdcdc">15</text><line x1="280.4" y1="29.5" x2="284.4" y2="29.5" stroke="#8c8c8c" stroke-width="1"/><text x="279.7" y="69.3" font-size="9.7" text-anchor="end" fill="#dcdcdc">10</text><line x1="280.4" y1="65.5" x2="284.4" y2="65.5" stroke="#8c8c8c" stroke-width="1"/><text x="279.7" y="105.3" font-size="9.7" text-anchor="end" fill="#dcdcdc">5</text><line x1="280.4" y1="101.5" x2="284.4" y2="101.5" stroke="#8c8c8c" stroke-width="1"/><line x1="284.4" y1="101.5" x2="383.59999999999997" y2="101.5" stroke="#858585" stroke-width="1" stroke-opacity="0.9"/><text x="279.7" y="141.3" font-size="9.7" text-anchor="end" fill="#dcdcdc">0</text><line x1="280.4" y1="137.5" x2="284.4" y2="137.5" stroke="#8c8c8c" stroke-width="1"/><line x1="284.4" y1="137.5" x2="383.59999999999997" y2="137.5" stroke="#a0a0a0" stroke-width="1" stroke-opacity="0.85"/><text x="279.7" y="176.3" font-size="9.7" text-anchor="end" fill="#dcdcdc">-5</text><line x1="280.4" y1="172.5" x2="284.4" y2="172.5" stroke="#8c8c8c" stroke-width="1"/><line x1="284.4" y1="172.5" x2="383.59999999999997" y2="172.5" stroke="#707070" stroke-width="1" stroke-opacity="0.8"/><text x="279.7" y="212.3" font-size="9.7" text-anchor="end" fill="#dcdcdc">-10</text><line x1="280.4" y1="208.5" x2="284.4" y2="208.5" stroke="#8c8c8c" stroke-width="1"/><text x="279.7" y="248.3" font-size="9.7" text-anchor="end" fill="#dcdcdc">-15</text><line x1="280.4" y1="244.5" x2="284.4" y2="244.5" stroke="#8c8c8c" stroke-width="1"/><line x1="284.4" y1="65.5" x2="383.59999999999997" y2="65.5" stroke="#e04848" stroke-width="1.5" stroke-opacity="0.95"/><line x1="284.4" y1="208.5" x2="383.59999999999997" y2="208.5" stroke="#e04848" stroke-width="1.5" stroke-opacity="0.95"/><line x1="284.4" y1="114.4" x2="383.59999999999997" y2="114.4" stroke="#e0d830" stroke-width="1.5" stroke-opacity="0.85"/><line x1="284.4" y1="157.3" x2="383.59999999999997" y2="157.3" stroke="#a09830" stroke-width="1.3" stroke-opacity="0.8"/><line x1="284.4" y1="128.7" x2="383.59999999999997" y2="128.7" stroke="#2c8a2c" stroke-width="1.2" stroke-opacity="0.85"/><line x1="284.4" y1="143.0" x2="383.59999999999997" y2="143.0" stroke="#2c8a2c" stroke-width="1.2" stroke-opacity="0.85"/><path d="M284.4 248.0V29.5H383.59999999999997M284.4 244.5H383.59999999999997" fill="none" stroke="#8c8c8c"/><path d="M383.59999999999997 29.5V248.0" fill="none" stroke="#7a7a7a" stroke-opacity="0.8"/><text x="333.4" y="254.6" font-size="10.3" text-anchor="middle" fill="#dcdcdc">White</text><rect x="421.4" y="29.5" width="99.20000000000005" height="215.0" fill="#252525"/><text x="461.2" y="26.2" font-size="10" text-anchor="middle" fill="#dcdcdc">DeltaC</text><rect x="431.7" y="109.8" width="77.3" height="26.6" fill="url(#g4)" stroke="#000" stroke-opacity="0.95" stroke-width="1"/><text x="416.7" y="33.3" font-size="9.7" text-anchor="end" fill="#dcdcdc">15</text><line x1="417.4" y1="29.5" x2="421.4" y2="29.5" stroke="#8c8c8c" stroke-width="1"/><text x="416.7" y="69.3" font-size="9.7" text-anchor="end" fill="#dcdcdc">10</text><line x1="417.4" y1="65.5" x2="421.4" y2="65.5" stroke="#8c8c8c" stroke-width="1"/><text x="416.7" y="105.3" font-size="9.7" text-anchor="end" fill="#dcdcdc">5</text><line x1="417.4" y1="101.5" x2="421.4" y2="101.5" stroke="#8c8c8c" stroke-width="1"/><line x1="421.4" y1="101.5" x2="520.6" y2="101.5" stroke="#858585" stroke-width="1" stroke-opacity="0.9"/><text x="416.7" y="141.3" font-size="9.7" text-anchor="end" fill="#dcdcdc">0</text><line x1="417.4" y1="137.5" x2="421.4" y2="137.5" stroke="#8c8c8c" stroke-width="1"/><line x1="421.4" y1="137.5" x2="520.6" y2="137.5" stroke="#a0a0a0" stroke-width="1" stroke-opacity="0.85"/><text x="416.7" y="176.3" font-size="9.7" text-anchor="end" fill="#dcdcdc">-5</text><line x1="417.4" y1="172.5" x2="421.4" y2="172.5" stroke="#8c8c8c" stroke-width="1"/><line x1="421.4" y1="172.5" x2="520.6" y2="172.5" stroke="#707070" stroke-width="1" stroke-opacity="0.8"/><text x="416.7" y="212.3" font-size="9.7" text-anchor="end" fill="#dcdcdc">-10</text><line x1="417.4" y1="208.5" x2="421.4" y2="208.5" stroke="#8c8c8c" stroke-width="1"/><text x="416.7" y="248.3" font-size="9.7" text-anchor="end" fill="#dcdcdc">-15</text><line x1="417.4" y1="244.5" x2="421.4" y2="244.5" stroke="#8c8c8c" stroke-width="1"/><line x1="421.4" y1="65.5" x2="520.6" y2="65.5" stroke="#e04848" stroke-width="1.5" stroke-opacity="0.95"/><line x1="421.4" y1="208.5" x2="520.6" y2="208.5" stroke="#e04848" stroke-width="1.5" stroke-opacity="0.95"/><line x1="421.4" y1="114.4" x2="520.6" y2="114.4" stroke="#e0d830" stroke-width="1.5" stroke-opacity="0.85"/><line x1="421.4" y1="157.3" x2="520.6" y2="157.3" stroke="#a09830" stroke-width="1.3" stroke-opacity="0.8"/><line x1="421.4" y1="128.7" x2="520.6" y2="128.7" stroke="#2c8a2c" stroke-width="1.2" stroke-opacity="0.85"/><line x1="421.4" y1="143.0" x2="520.6" y2="143.0" stroke="#2c8a2c" stroke-width="1.2" stroke-opacity="0.85"/><path d="M421.4 248.0V29.5H520.6M421.4 244.5H520.6" fill="none" stroke="#8c8c8c"/><path d="M520.6 29.5V248.0" fill="none" stroke="#7a7a7a" stroke-opacity="0.8"/><text x="470.4" y="254.6" font-size="10.3" text-anchor="middle" fill="#dcdcdc">White</text><rect x="558.4" y="29.5" width="99.20000000000005" height="215.0" fill="#252525"/><text x="598.2" y="26.2" font-size="10" text-anchor="middle" fill="#dcdcdc">DeltaH</text><text x="553.7" y="33.3" font-size="9.7" text-anchor="end" fill="#dcdcdc">15</text><line x1="554.4" y1="29.5" x2="558.4" y2="29.5" stroke="#8c8c8c" stroke-width="1"/><text x="553.7" y="69.3" font-size="9.7" text-anchor="end" fill="#dcdcdc">10</text><line x1="554.4" y1="65.5" x2="558.4" y2="65.5" stroke="#8c8c8c" stroke-width="1"/><text x="553.7" y="105.3" font-size="9.7" text-anchor="end" fill="#dcdcdc">5</text><line x1="554.4" y1="101.5" x2="558.4" y2="101.5" stroke="#8c8c8c" stroke-width="1"/><line x1="558.4" y1="101.5" x2="657.6" y2="101.5" stroke="#858585" stroke-width="1" stroke-opacity="0.9"/><text x="553.7" y="141.3" font-size="9.7" text-anchor="end" fill="#dcdcdc">0</text><line x1="554.4" y1="137.5" x2="558.4" y2="137.5" stroke="#8c8c8c" stroke-width="1"/><line x1="558.4" y1="137.5" x2="657.6" y2="137.5" stroke="#a0a0a0" stroke-width="1" stroke-opacity="0.85"/><text x="553.7" y="176.3" font-size="9.7" text-anchor="end" fill="#dcdcdc">-5</text><line x1="554.4" y1="172.5" x2="558.4" y2="172.5" stroke="#8c8c8c" stroke-width="1"/><line x1="558.4" y1="172.5" x2="657.6" y2="172.5" stroke="#707070" stroke-width="1" stroke-opacity="0.8"/><text x="553.7" y="212.3" font-size="9.7" text-anchor="end" fill="#dcdcdc">-10</text><line x1="554.4" y1="208.5" x2="558.4" y2="208.5" stroke="#8c8c8c" stroke-width="1"/><text x="553.7" y="248.3" font-size="9.7" text-anchor="end" fill="#dcdcdc">-15</text><line x1="554.4" y1="244.5" x2="558.4" y2="244.5" stroke="#8c8c8c" stroke-width="1"/><line x1="558.4" y1="65.5" x2="657.6" y2="65.5" stroke="#e04848" stroke-width="1.5" stroke-opacity="0.95"/><line x1="558.4" y1="208.5" x2="657.6" y2="208.5" stroke="#e04848" stroke-width="1.5" stroke-opacity="0.95"/><line x1="558.4" y1="114.4" x2="657.6" y2="114.4" stroke="#e0d830" stroke-width="1.5" stroke-opacity="0.85"/><line x1="558.4" y1="157.3" x2="657.6" y2="157.3" stroke="#a09830" stroke-width="1.3" stroke-opacity="0.8"/><line x1="558.4" y1="128.7" x2="657.6" y2="128.7" stroke="#2c8a2c" stroke-width="1.2" stroke-opacity="0.85"/><line x1="558.4" y1="143.0" x2="657.6" y2="143.0" stroke="#2c8a2c" stroke-width="1.2" stroke-opacity="0.85"/><path d="M558.4 248.0V29.5H657.6M558.4 244.5H657.6" fill="none" stroke="#8c8c8c"/><path d="M657.6 29.5V248.0" fill="none" stroke="#7a7a7a" stroke-opacity="0.8"/><text x="607.4" y="254.6" font-size="10.3" text-anchor="middle" fill="#dcdcdc">White</text><rect x="235.5" y="261" width="460.2" height="107.5" fill="#000"/><rect x="248.8" y="265.5" width="47.2" height="38.5" fill="#f3f7fd" stroke="#fff" stroke-opacity="0.45"/><rect x="248.8" y="315" width="47.2" height="38.5" fill="#f7f7f7" stroke="#fff" stroke-opacity="0.45"/><text x="272.5" y="364" font-size="9.1" text-anchor="middle" fill="#f4f4f4" stroke="#f4f4f4" stroke-width="0.2">White</text><rect x="305.1" y="265.5" width="47.2" height="38.5" fill="#f50a32" stroke="#fff" stroke-opacity="0.45"/><rect x="305.1" y="315" width="47.2" height="38.5" fill="#fc0a28" stroke="#fff" stroke-opacity="0.45"/><text x="328.8" y="364" font-size="9.1" text-anchor="middle" fill="#f4f4f4" stroke="#f4f4f4" stroke-width="0.2">Red</text><rect x="361.3" y="265.5" width="47.2" height="38.5" fill="#00fa64" stroke="#fff" stroke-opacity="0.45"/><rect x="361.3" y="315" width="47.2" height="38.5" fill="#28f578" stroke="#fff" stroke-opacity="0.45"/><text x="385.0" y="364" font-size="9.1" text-anchor="middle" fill="#f4f4f4" stroke="#f4f4f4" stroke-width="0.2">Green</text><rect x="417.6" y="265.5" width="47.2" height="38.5" fill="#0a0afa" stroke="#fff" stroke-opacity="0.45"/><rect x="417.6" y="315" width="47.2" height="38.5" fill="#1e1eeb" stroke="#fff" stroke-opacity="0.45"/><text x="441.3" y="364" font-size="9.1" text-anchor="middle" fill="#f4f4f4" stroke="#f4f4f4" stroke-width="0.2">Blue</text><rect x="473.9" y="265.5" width="47.2" height="38.5" fill="#00ffff" stroke="#fff" stroke-opacity="0.45"/><rect x="473.9" y="315" width="47.2" height="38.5" fill="#3cffff" stroke="#fff" stroke-opacity="0.45"/><text x="497.6" y="364" font-size="9.1" text-anchor="middle" fill="#f4f4f4" stroke="#f4f4f4" stroke-width="0.2">Cyan</text><rect x="530.2" y="265.5" width="47.2" height="38.5" fill="#fa14f0" stroke="#fff" stroke-opacity="0.45"/><rect x="530.2" y="315" width="47.2" height="38.5" fill="#ff28eb" stroke="#fff" stroke-opacity="0.45"/><text x="553.9" y="364" font-size="9.1" text-anchor="middle" fill="#f4f4f4" stroke="#f4f4f4" stroke-width="0.2">Magenta</text><rect x="586.4" y="265.5" width="47.2" height="38.5" fill="#fffa00" stroke="#fff" stroke-opacity="0.45"/><rect x="586.4" y="315" width="47.2" height="38.5" fill="#ffff14" stroke="#fff" stroke-opacity="0.45"/><text x="610.1" y="364" font-size="9.1" text-anchor="middle" fill="#f4f4f4" stroke="#f4f4f4" stroke-width="0.2">Yellow</text><rect x="642.7" y="265.5" width="47.2" height="38.5" fill="#f3f7fd" stroke="#fff" stroke-opacity="0.45"/><rect x="642.7" y="315" width="47.2" height="38.5" fill="#f7f7f7" stroke="#fff" stroke-opacity="0.45"/><text x="666.4" y="364" font-size="9.1" text-anchor="middle" fill="#f4f4f4" stroke="#f4f4f4" stroke-width="0.2">100W</text><text transform="translate(245.6,285) rotate(-90)" font-size="8.1" text-anchor="middle" fill="#f0f0f0">Actual</text><text transform="translate(245.6,334) rotate(-90)" font-size="8.1" text-anchor="middle" fill="#f0f0f0">Target</text><rect x="255.5" y="390.5" width="426.5" height="132.5" fill="#252525"/><text x="460.7" y="386" font-size="10" text-anchor="middle" fill="#dcdcdc">DeltaE 2000</text><rect x="261.7" y="492.2" width="40.4" height="30.8" fill="url(#g5)" stroke="#000" stroke-opacity="0.6" stroke-width="1"/><text x="282.2" y="533.6" font-size="10.6" text-anchor="middle" fill="#dcdcdc">White</text><rect x="315.0" y="495.3" width="40.4" height="27.7" fill="url(#g6)" stroke="#000" stroke-opacity="0.6" stroke-width="1"/><text x="335.5" y="533.6" font-size="10.6" text-anchor="middle" fill="#dcdcdc">Red</text><rect x="368.3" y="509.4" width="40.4" height="13.6" fill="url(#g7)" stroke="#000" stroke-opacity="0.6" stroke-width="1"/><text x="388.8" y="533.6" font-size="10.6" text-anchor="middle" fill="#dcdcdc">Green</text><rect x="421.6" y="507.2" width="40.4" height="15.8" fill="url(#g8)" stroke="#000" stroke-opacity="0.6" stroke-width="1"/><text x="442.1" y="533.6" font-size="10.6" text-anchor="middle" fill="#dcdcdc">Blue</text><rect x="474.9" y="508.0" width="40.4" height="15.0" fill="url(#g9)" stroke="#000" stroke-opacity="0.6" stroke-width="1"/><text x="495.4" y="533.6" font-size="10.6" text-anchor="middle" fill="#dcdcdc">Cyan</text><rect x="528.3" y="509.8" width="40.4" height="13.2" fill="url(#g10)" stroke="#000" stroke-opacity="0.6" stroke-width="1"/><text x="548.7" y="533.6" font-size="10.6" text-anchor="middle" fill="#dcdcdc">Magenta</text><rect x="581.6" y="503.6" width="40.4" height="19.4" fill="url(#g11)" stroke="#000" stroke-opacity="0.6" stroke-width="1"/><text x="602.0" y="533.6" font-size="10.6" text-anchor="middle" fill="#dcdcdc">Yellow</text><rect x="634.9" y="492.2" width="40.4" height="30.8" fill="url(#g12)" stroke="#000" stroke-opacity="0.6" stroke-width="1"/><text x="655.3" y="533.6" font-size="10.6" text-anchor="middle" fill="#dcdcdc">100W</text><text x="251.5" y="394.7" font-size="10" text-anchor="end" fill="#dcdcdc">15</text><line x1="251.5" y1="391.0" x2="255.5" y2="391.0" stroke="#8c8c8c" stroke-width="1"/><text x="251.5" y="438.7" font-size="10" text-anchor="end" fill="#dcdcdc">10</text><line x1="251.5" y1="435.0" x2="255.5" y2="435.0" stroke="#8c8c8c" stroke-width="1"/><text x="251.5" y="482.7" font-size="10" text-anchor="end" fill="#dcdcdc">5</text><line x1="251.5" y1="479.0" x2="255.5" y2="479.0" stroke="#8c8c8c" stroke-width="1"/><line x1="255.5" y1="479.0" x2="682" y2="479.0" stroke="#808080" stroke-width="1"/><text x="251.5" y="526.7" font-size="10" text-anchor="end" fill="#dcdcdc">0</text><line x1="251.5" y1="523.0" x2="255.5" y2="523.0" stroke="#8c8c8c" stroke-width="1"/><line x1="255.5" y1="435.0" x2="682" y2="435.0" stroke="#d02020" stroke-width="1.4"/><line x1="255.5" y1="496.6" x2="682" y2="496.6" stroke="#e8e040" stroke-width="1.1" stroke-opacity="0.9"/><line x1="255.5" y1="514.2" x2="682" y2="514.2" stroke="#2a8a2a" stroke-width="1.1" stroke-opacity="0.75"/><path d="M256.0 526V391H681.5V526M255.5 523H682" fill="none" stroke="#8c8c8c"/><line x1="308.8" y1="523" x2="308.8" y2="526.5" stroke="#8c8c8c" stroke-width="1"/><line x1="362.1" y1="523" x2="362.1" y2="526.5" stroke="#8c8c8c" stroke-width="1"/><line x1="415.4" y1="523" x2="415.4" y2="526.5" stroke="#8c8c8c" stroke-width="1"/><line x1="468.8" y1="523" x2="468.8" y2="526.5" stroke="#8c8c8c" stroke-width="1"/><line x1="522.1" y1="523" x2="522.1" y2="526.5" stroke="#8c8c8c" stroke-width="1"/><line x1="575.4" y1="523" x2="575.4" y2="526.5" stroke="#8c8c8c" stroke-width="1"/><line x1="628.7" y1="523" x2="628.7" y2="526.5" stroke="#8c8c8c" stroke-width="1"/><rect x="702.6" y="10.3" width="493.4" height="378.4" fill="none" stroke="#000" stroke-width="4.6"/><rect x="726.9" y="28.5" width="466.4" height="339.0" fill="#252525"/><text x="949.3" y="25" font-size="10" text-anchor="middle" textLength="54" lengthAdjust="spacingAndGlyphs" fill="#dcdcdc">CIE 1931 xy</text><g clip-path="url(#hs)"><g filter="url(#vb)"><rect x="756.5" y="30.0" width="33.1" height="3.6" fill="url(#a0)"/><rect x="750.8" y="33.0" width="48.8" height="3.6" fill="url(#a1)"/><rect x="747.1" y="36.0" width="60.4" height="3.6" fill="url(#a2)"/><rect x="744.3" y="39.0" width="70.5" height="3.6" fill="url(#a3)"/><rect x="742.0" y="42.0" width="79.7" height="3.6" fill="url(#a4)"/><rect x="739.9" y="45.0" width="88.1" height="3.6" fill="url(#a5)"/><rect x="738.2" y="48.0" width="96.0" height="3.6" fill="url(#a6)"/><rect x="736.7" y="51.0" width="103.4" height="3.6" fill="url(#a7)"/><rect x="735.3" y="54.0" width="110.4" height="3.6" fill="url(#a8)"/><rect x="734.0" y="57.0" width="117.1" height="3.6" fill="url(#a9)"/><rect x="733.0" y="60.0" width="123.4" height="3.6" fill="url(#a10)"/><rect x="732.0" y="63.0" width="129.5" height="3.6" fill="url(#a11)"/><rect x="731.3" y="66.0" width="135.3" height="3.6" fill="url(#a12)"/><rect x="730.5" y="69.0" width="140.9" height="3.6" fill="url(#a13)"/><rect x="729.9" y="72.0" width="146.3" height="3.6" fill="url(#a14)"/><rect x="729.3" y="75.0" width="151.6" height="3.6" fill="url(#a15)"/><rect x="728.8" y="78.0" width="156.7" height="3.6" fill="url(#a16)"/><rect x="728.4" y="81.0" width="161.7" height="3.6" fill="url(#a17)"/><rect x="728.0" y="84.0" width="166.6" height="3.6" fill="url(#a18)"/><rect x="727.7" y="87.0" width="171.4" height="3.6" fill="url(#a19)"/><rect x="727.4" y="90.0" width="176.1" height="3.6" fill="url(#a20)"/><rect x="727.2" y="93.0" width="180.8" height="3.6" fill="url(#a21)"/><rect x="727.0" y="96.0" width="185.3" height="3.6" fill="url(#a22)"/><rect x="726.8" y="99.0" width="189.8" height="3.6" fill="url(#a23)"/><rect x="726.7" y="102.0" width="194.3" height="3.6" fill="url(#a24)"/><rect x="726.7" y="105.0" width="198.6" height="3.6" fill="url(#a25)"/><rect x="726.6" y="108.0" width="202.9" height="3.6" fill="url(#a26)"/><rect x="726.6" y="111.0" width="207.2" height="3.6" fill="url(#a27)"/><rect x="726.7" y="114.0" width="211.4" height="3.6" fill="url(#a28)"/><rect x="726.7" y="117.0" width="215.6" height="3.6" fill="url(#a29)"/><rect x="726.8" y="120.0" width="219.7" height="3.6" fill="url(#a30)"/><rect x="726.9" y="123.0" width="223.8" height="3.6" fill="url(#a31)"/><rect x="727.1" y="126.0" width="227.8" height="3.6" fill="url(#a32)"/><rect x="727.2" y="129.0" width="231.8" height="3.6" fill="url(#a33)"/><rect x="727.4" y="132.0" width="235.8" height="3.6" fill="url(#a34)"/><rect x="727.7" y="135.0" width="239.8" height="3.6" fill="url(#a35)"/><rect x="727.9" y="138.0" width="243.7" height="3.6" fill="url(#a36)"/><rect x="728.2" y="141.0" width="247.6" height="3.6" fill="url(#a37)"/><rect x="728.5" y="144.0" width="251.5" height="3.6" fill="url(#a38)"/><rect x="728.7" y="147.0" width="255.3" height="3.6" fill="url(#a39)"/><rect x="729.1" y="150.0" width="259.1" height="3.6" fill="url(#a40)"/><rect x="729.4" y="153.0" width="262.9" height="3.6" fill="url(#a41)"/><rect x="729.8" y="156.0" width="266.7" height="3.6" fill="url(#a42)"/><rect x="730.2" y="159.0" width="270.4" height="3.6" fill="url(#a43)"/><rect x="730.6" y="162.0" width="274.1" height="3.6" fill="url(#a44)"/><rect x="731.0" y="165.0" width="277.8" height="3.6" fill="url(#a45)"/><rect x="731.5" y="168.0" width="281.5" height="3.6" fill="url(#a46)"/><rect x="731.9" y="171.0" width="285.2" height="3.6" fill="url(#a47)"/><rect x="732.4" y="174.0" width="288.8" height="3.6" fill="url(#a48)"/><rect x="732.9" y="177.0" width="292.4" height="3.6" fill="url(#a49)"/><rect x="733.5" y="180.0" width="296.1" height="3.6" fill="url(#a50)"/><rect x="734.0" y="183.0" width="299.7" height="3.6" fill="url(#a51)"/><rect x="734.6" y="186.0" width="303.3" height="3.6" fill="url(#a52)"/><rect x="735.1" y="189.0" width="306.9" height="3.6" fill="url(#a53)"/><rect x="735.7" y="192.0" width="310.4" height="3.6" fill="url(#a54)"/><rect x="736.3" y="195.0" width="314.0" height="3.6" fill="url(#a55)"/><rect x="736.9" y="198.0" width="317.5" height="3.6" fill="url(#a56)"/><rect x="737.5" y="201.0" width="321.0" height="3.6" fill="url(#a57)"/><rect x="738.2" y="204.0" width="324.4" height="3.6" fill="url(#a58)"/><rect x="738.8" y="207.0" width="327.9" height="3.6" fill="url(#a59)"/><rect x="739.5" y="210.0" width="331.4" height="3.6" fill="url(#a60)"/><rect x="740.2" y="213.0" width="334.8" height="3.6" fill="url(#a61)"/><rect x="740.9" y="216.0" width="338.2" height="3.6" fill="url(#a62)"/><rect x="741.6" y="219.0" width="341.7" height="3.6" fill="url(#a63)"/><rect x="742.4" y="222.0" width="345.1" height="3.6" fill="url(#a64)"/><rect x="743.2" y="225.0" width="348.5" height="3.6" fill="url(#a65)"/><rect x="743.9" y="228.0" width="351.9" height="3.6" fill="url(#a66)"/><rect x="744.7" y="231.0" width="355.2" height="3.6" fill="url(#a67)"/><rect x="745.5" y="234.0" width="358.5" height="3.6" fill="url(#a68)"/><rect x="746.4" y="237.0" width="361.8" height="3.6" fill="url(#a69)"/><rect x="747.2" y="240.0" width="365.1" height="3.6" fill="url(#a70)"/><rect x="748.0" y="243.0" width="368.4" height="3.6" fill="url(#a71)"/><rect x="748.9" y="246.0" width="371.7" height="3.6" fill="url(#a72)"/><rect x="749.8" y="249.0" width="374.9" height="3.6" fill="url(#a73)"/><rect x="750.7" y="252.0" width="378.2" height="3.6" fill="url(#a74)"/><rect x="751.6" y="255.0" width="381.4" height="3.6" fill="url(#a75)"/><rect x="752.5" y="258.0" width="382.7" height="3.6" fill="url(#a76)"/><rect x="753.5" y="261.0" width="381.5" height="3.6" fill="url(#a77)"/><rect x="754.4" y="264.0" width="374.1" height="3.6" fill="url(#a78)"/><rect x="755.4" y="267.0" width="364.2" height="3.6" fill="url(#a79)"/><rect x="756.4" y="270.0" width="354.3" height="3.6" fill="url(#a80)"/><rect x="757.5" y="273.0" width="344.4" height="3.6" fill="url(#a81)"/><rect x="758.5" y="276.0" width="334.5" height="3.6" fill="url(#a82)"/><rect x="759.6" y="279.0" width="324.5" height="3.6" fill="url(#a83)"/><rect x="760.7" y="282.0" width="314.5" height="3.6" fill="url(#a84)"/><rect x="761.9" y="285.0" width="304.5" height="3.6" fill="url(#a85)"/><rect x="763.1" y="288.0" width="294.5" height="3.6" fill="url(#a86)"/><rect x="764.3" y="291.0" width="284.4" height="3.6" fill="url(#a87)"/><rect x="765.5" y="294.0" width="274.2" height="3.6" fill="url(#a88)"/><rect x="766.8" y="297.0" width="264.1" height="3.6" fill="url(#a89)"/><rect x="768.2" y="300.0" width="253.8" height="3.6" fill="url(#a90)"/><rect x="769.6" y="303.0" width="243.6" height="3.6" fill="url(#a91)"/><rect x="771.0" y="306.0" width="233.3" height="3.6" fill="url(#a92)"/><rect x="772.5" y="309.0" width="222.9" height="3.6" fill="url(#a93)"/><rect x="774.0" y="312.0" width="212.6" height="3.6" fill="url(#a94)"/><rect x="775.4" y="315.0" width="202.2" height="3.6" fill="url(#a95)"/><rect x="777.0" y="318.0" width="191.8" height="3.6" fill="url(#a96)"/><rect x="778.5" y="321.0" width="181.4" height="3.6" fill="url(#a97)"/><rect x="780.1" y="324.0" width="170.9" height="3.6" fill="url(#a98)"/><rect x="781.8" y="327.0" width="160.3" height="3.6" fill="url(#a99)"/><rect x="783.5" y="330.0" width="149.7" height="3.6" fill="url(#a100)"/><rect x="785.3" y="333.0" width="139.1" height="3.6" fill="url(#a101)"/><rect x="787.2" y="336.0" width="128.4" height="3.6" fill="url(#a102)"/><rect x="789.2" y="339.0" width="117.5" height="3.6" fill="url(#a103)"/><rect x="791.3" y="342.0" width="106.5" height="3.6" fill="url(#a104)"/><rect x="793.5" y="345.0" width="95.4" height="3.6" fill="url(#a105)"/><rect x="795.9" y="348.0" width="84.1" height="3.6" fill="url(#a106)"/><rect x="798.7" y="351.0" width="72.5" height="3.6" fill="url(#a107)"/><rect x="801.7" y="354.0" width="60.6" height="3.6" fill="url(#a108)"/><rect x="805.3" y="357.0" width="48.1" height="3.6" fill="url(#a109)"/><rect x="809.6" y="360.0" width="35.0" height="3.6" fill="url(#a110)"/><rect x="814.3" y="363.0" width="21.4" height="3.6" fill="url(#a111)"/><rect x="819.0" y="366.0" width="7.8" height="3.6" fill="url(#a112)"/></g></g><g clip-path="url(#tr)"><g filter="url(#vb)"><rect x="871.9" y="89.0" width="6.4" height="3.6" fill="url(#b0)"/><rect x="871.2" y="92.0" width="11.7" height="3.6" fill="url(#b1)"/><rect x="870.4" y="95.0" width="17.1" height="3.6" fill="url(#b2)"/><rect x="869.7" y="98.0" width="22.5" height="3.6" fill="url(#b3)"/><rect x="868.9" y="101.0" width="27.9" height="3.6" fill="url(#b4)"/><rect x="868.2" y="104.0" width="33.2" height="3.6" fill="url(#b5)"/><rect x="867.4" y="107.0" width="38.6" height="3.6" fill="url(#b6)"/><rect x="866.6" y="110.0" width="44.0" height="3.6" fill="url(#b7)"/><rect x="865.9" y="113.0" width="49.4" height="3.6" fill="url(#b8)"/><rect x="865.1" y="116.0" width="54.7" height="3.6" fill="url(#b9)"/><rect x="864.4" y="119.0" width="60.1" height="3.6" fill="url(#b10)"/><rect x="863.6" y="122.0" width="65.5" height="3.6" fill="url(#b11)"/><rect x="862.9" y="125.0" width="70.8" height="3.6" fill="url(#b12)"/><rect x="862.1" y="128.0" width="76.2" height="3.6" fill="url(#b13)"/><rect x="861.4" y="131.0" width="81.6" height="3.6" fill="url(#b14)"/><rect x="860.6" y="134.0" width="87.0" height="3.6" fill="url(#b15)"/><rect x="859.9" y="137.0" width="92.3" height="3.6" fill="url(#b16)"/><rect x="859.1" y="140.0" width="97.7" height="3.6" fill="url(#b17)"/><rect x="858.4" y="143.0" width="103.1" height="3.6" fill="url(#b18)"/><rect x="857.6" y="146.0" width="108.5" height="3.6" fill="url(#b19)"/><rect x="856.9" y="149.0" width="113.8" height="3.6" fill="url(#b20)"/><rect x="856.1" y="152.0" width="119.2" height="3.6" fill="url(#b21)"/><rect x="855.4" y="155.0" width="124.6" height="3.6" fill="url(#b22)"/><rect x="854.6" y="158.0" width="130.0" height="3.6" fill="url(#b23)"/><rect x="853.9" y="161.0" width="135.3" height="3.6" fill="url(#b24)"/><rect x="853.1" y="164.0" width="140.7" height="3.6" fill="url(#b25)"/><rect x="852.4" y="167.0" width="146.1" height="3.6" fill="url(#b26)"/><rect x="851.6" y="170.0" width="151.5" height="3.6" fill="url(#b27)"/><rect x="850.9" y="173.0" width="156.8" height="3.6" fill="url(#b28)"/><rect x="850.1" y="176.0" width="162.2" height="3.6" fill="url(#b29)"/><rect x="849.3" y="179.0" width="167.6" height="3.6" fill="url(#b30)"/><rect x="848.6" y="182.0" width="173.0" height="3.6" fill="url(#b31)"/><rect x="847.8" y="185.0" width="178.3" height="3.6" fill="url(#b32)"/><rect x="847.1" y="188.0" width="183.7" height="3.6" fill="url(#b33)"/><rect x="846.3" y="191.0" width="189.1" height="3.6" fill="url(#b34)"/><rect x="845.6" y="194.0" width="194.5" height="3.6" fill="url(#b35)"/><rect x="844.8" y="197.0" width="199.8" height="3.6" fill="url(#b36)"/><rect x="844.1" y="200.0" width="205.2" height="3.6" fill="url(#b37)"/><rect x="843.3" y="203.0" width="210.6" height="3.6" fill="url(#b38)"/><rect x="842.6" y="206.0" width="216.0" height="3.6" fill="url(#b39)"/><rect x="841.8" y="209.0" width="221.3" height="3.6" fill="url(#b40)"/><rect x="841.1" y="212.0" width="226.7" height="3.6" fill="url(#b41)"/><rect x="840.3" y="215.0" width="232.1" height="3.6" fill="url(#b42)"/><rect x="839.6" y="218.0" width="237.5" height="3.6" fill="url(#b43)"/><rect x="838.8" y="221.0" width="242.8" height="3.6" fill="url(#b44)"/><rect x="838.1" y="224.0" width="248.2" height="3.6" fill="url(#b45)"/><rect x="837.3" y="227.0" width="253.6" height="3.6" fill="url(#b46)"/><rect x="836.6" y="230.0" width="258.9" height="3.6" fill="url(#b47)"/><rect x="835.8" y="233.0" width="264.3" height="3.6" fill="url(#b48)"/><rect x="835.1" y="236.0" width="269.1" height="3.6" fill="url(#b49)"/><rect x="834.3" y="239.0" width="268.7" height="3.6" fill="url(#b50)"/><rect x="833.6" y="242.0" width="261.1" height="3.6" fill="url(#b51)"/><rect x="832.8" y="245.0" width="253.4" height="3.6" fill="url(#b52)"/><rect x="832.0" y="248.0" width="245.8" height="3.6" fill="url(#b53)"/><rect x="831.3" y="251.0" width="238.1" height="3.6" fill="url(#b54)"/><rect x="830.5" y="254.0" width="230.5" height="3.6" fill="url(#b55)"/><rect x="829.8" y="257.0" width="222.8" height="3.6" fill="url(#b56)"/><rect x="829.0" y="260.0" width="215.2" height="3.6" fill="url(#b57)"/><rect x="828.3" y="263.0" width="207.5" height="3.6" fill="url(#b58)"/><rect x="827.5" y="266.0" width="199.9" height="3.6" fill="url(#b59)"/><rect x="826.8" y="269.0" width="192.3" height="3.6" fill="url(#b60)"/><rect x="826.0" y="272.0" width="184.6" height="3.6" fill="url(#b61)"/><rect x="825.3" y="275.0" width="177.0" height="3.6" fill="url(#b62)"/><rect x="824.5" y="278.0" width="169.3" height="3.6" fill="url(#b63)"/><rect x="823.8" y="281.0" width="161.7" height="3.6" fill="url(#b64)"/><rect x="823.0" y="284.0" width="154.0" height="3.6" fill="url(#b65)"/><rect x="822.3" y="287.0" width="146.4" height="3.6" fill="url(#b66)"/><rect x="821.5" y="290.0" width="138.7" height="3.6" fill="url(#b67)"/><rect x="820.8" y="293.0" width="131.1" height="3.6" fill="url(#b68)"/><rect x="820.0" y="296.0" width="123.4" height="3.6" fill="url(#b69)"/><rect x="819.3" y="299.0" width="115.8" height="3.6" fill="url(#b70)"/><rect x="818.5" y="302.0" width="108.1" height="3.6" fill="url(#b71)"/><rect x="817.8" y="305.0" width="100.5" height="3.6" fill="url(#b72)"/><rect x="817.0" y="308.0" width="92.8" height="3.6" fill="url(#b73)"/><rect x="816.2" y="311.0" width="85.2" height="3.6" fill="url(#b74)"/><rect x="815.5" y="314.0" width="77.5" height="3.6" fill="url(#b75)"/><rect x="814.7" y="317.0" width="69.9" height="3.6" fill="url(#b76)"/><rect x="814.0" y="320.0" width="62.2" height="3.6" fill="url(#b77)"/><rect x="813.2" y="323.0" width="54.6" height="3.6" fill="url(#b78)"/><rect x="812.5" y="326.0" width="46.9" height="3.6" fill="url(#b79)"/><rect x="811.7" y="329.0" width="39.3" height="3.6" fill="url(#b80)"/><rect x="811.0" y="332.0" width="31.6" height="3.6" fill="url(#b81)"/><rect x="810.2" y="335.0" width="24.0" height="3.6" fill="url(#b82)"/><rect x="809.5" y="338.0" width="16.3" height="3.6" fill="url(#b83)"/><rect x="808.9" y="341.0" width="8.5" height="3.6" fill="url(#b84)"/></g></g><path d="M726.9 371.8V28.5H1192.8V367.5M722.4 367.5H1193.3" fill="none" stroke="#8c8c8c"/><rect x="1024.7" y="28.2" width="167.29999999999987" height="126.10000000000001" fill="#2b2b2b"/><g clip-path="url(#ic)"><g filter="url(#vb)"><rect x="1022.7" y="23.8" width="170.9" height="3.6" fill="url(#c0)"/><rect x="1022.7" y="26.8" width="170.9" height="3.6" fill="url(#c1)"/><rect x="1022.7" y="29.8" width="170.9" height="3.6" fill="url(#c2)"/><rect x="1022.7" y="32.8" width="170.9" height="3.6" fill="url(#c3)"/><rect x="1022.7" y="35.8" width="170.9" height="3.6" fill="url(#c4)"/><rect x="1022.7" y="38.8" width="170.9" height="3.6" fill="url(#c5)"/><rect x="1022.7" y="41.8" width="170.9" height="3.6" fill="url(#c6)"/><rect x="1022.7" y="44.8" width="170.9" height="3.6" fill="url(#c7)"/><rect x="1022.7" y="47.8" width="170.9" height="3.6" fill="url(#c8)"/><rect x="1022.7" y="50.8" width="170.9" height="3.6" fill="url(#c9)"/><rect x="1022.7" y="53.8" width="170.9" height="3.6" fill="url(#c10)"/><rect x="1022.7" y="56.8" width="170.9" height="3.6" fill="url(#c11)"/><rect x="1022.7" y="59.8" width="170.9" height="3.6" fill="url(#c12)"/><rect x="1022.7" y="62.8" width="170.9" height="3.6" fill="url(#c13)"/><rect x="1022.7" y="65.8" width="170.9" height="3.6" fill="url(#c14)"/><rect x="1022.7" y="68.8" width="170.9" height="3.6" fill="url(#c15)"/><rect x="1022.7" y="71.8" width="170.9" height="3.6" fill="url(#c16)"/><rect x="1022.7" y="74.8" width="170.9" height="3.6" fill="url(#c17)"/><rect x="1022.7" y="77.8" width="170.9" height="3.6" fill="url(#c18)"/><rect x="1022.7" y="80.8" width="170.9" height="3.6" fill="url(#c19)"/><rect x="1022.7" y="83.8" width="170.9" height="3.6" fill="url(#c20)"/><rect x="1022.7" y="86.8" width="170.9" height="3.6" fill="url(#c21)"/><rect x="1022.7" y="89.8" width="170.9" height="3.6" fill="url(#c22)"/><rect x="1022.7" y="92.8" width="170.9" height="3.6" fill="url(#c23)"/><rect x="1022.7" y="95.8" width="170.9" height="3.6" fill="url(#c24)"/><rect x="1022.7" y="98.8" width="170.9" height="3.6" fill="url(#c25)"/><rect x="1022.7" y="101.8" width="170.9" height="3.6" fill="url(#c26)"/><rect x="1022.7" y="104.8" width="170.9" height="3.6" fill="url(#c27)"/><rect x="1022.7" y="107.8" width="170.9" height="3.6" fill="url(#c28)"/><rect x="1022.7" y="110.8" width="170.9" height="3.6" fill="url(#c29)"/><rect x="1022.7" y="113.8" width="170.9" height="3.6" fill="url(#c30)"/><rect x="1022.7" y="116.8" width="170.9" height="3.6" fill="url(#c31)"/><rect x="1022.7" y="119.8" width="170.9" height="3.6" fill="url(#c32)"/><rect x="1022.7" y="122.8" width="170.9" height="3.6" fill="url(#c33)"/><rect x="1022.7" y="125.8" width="170.9" height="3.6" fill="url(#c34)"/><rect x="1022.7" y="128.8" width="170.9" height="3.6" fill="url(#c35)"/><rect x="1022.7" y="131.8" width="170.9" height="3.6" fill="url(#c36)"/><rect x="1022.7" y="134.8" width="170.9" height="3.6" fill="url(#c37)"/><rect x="1022.7" y="137.8" width="170.9" height="3.6" fill="url(#c38)"/><rect x="1022.7" y="140.8" width="170.9" height="3.6" fill="url(#c39)"/><rect x="1022.7" y="143.8" width="170.9" height="3.6" fill="url(#c40)"/><rect x="1022.7" y="146.8" width="170.9" height="3.6" fill="url(#c41)"/><rect x="1022.7" y="149.8" width="170.9" height="3.6" fill="url(#c42)"/><rect x="1022.7" y="152.8" width="170.9" height="3.6" fill="url(#c43)"/><rect x="1022.7" y="155.8" width="170.9" height="3.1" fill="url(#c44)"/></g></g><rect x="1027.2" y="30.3" width="161.9" height="121.5" fill="none" stroke="#fff" stroke-opacity="0.35" stroke-width="1"/><rect x="1103.4" y="86.6" width="9.6" height="8.7" fill="none" stroke="#1c1c1c" stroke-width="1.2"/><circle cx="1083.4" cy="106.2" r="2.8" fill="none" stroke="#222" stroke-width="1.1"/><line x1="726.9" y1="367.5" x2="726.9" y2="371.5" stroke="#8c8c8c" stroke-width="1"/><text x="726.4" y="382.4" font-size="10" text-anchor="middle" fill="#dcdcdc">0</text><line x1="782.2" y1="367.5" x2="782.2" y2="371.5" stroke="#8c8c8c" stroke-width="1"/><text x="781.7" y="382.4" font-size="10" text-anchor="middle" fill="#dcdcdc">0.1</text><line x1="722.9" y1="327.2" x2="726.9" y2="327.2" stroke="#8c8c8c" stroke-width="1"/><text x="721.9" y="331.0" font-size="10" text-anchor="end" fill="#dcdcdc">0.1</text><line x1="837.6" y1="367.5" x2="837.6" y2="371.5" stroke="#8c8c8c" stroke-width="1"/><text x="837.1" y="382.4" font-size="10" text-anchor="middle" fill="#dcdcdc">0.2</text><line x1="722.9" y1="286.9" x2="726.9" y2="286.9" stroke="#8c8c8c" stroke-width="1"/><text x="721.9" y="290.7" font-size="10" text-anchor="end" fill="#dcdcdc">0.2</text><line x1="892.9" y1="367.5" x2="892.9" y2="371.5" stroke="#8c8c8c" stroke-width="1"/><text x="892.4" y="382.4" font-size="10" text-anchor="middle" fill="#dcdcdc">0.3</text><line x1="722.9" y1="246.7" x2="726.9" y2="246.7" stroke="#8c8c8c" stroke-width="1"/><text x="721.9" y="250.5" font-size="10" text-anchor="end" fill="#dcdcdc">0.3</text><line x1="948.2" y1="367.5" x2="948.2" y2="371.5" stroke="#8c8c8c" stroke-width="1"/><text x="947.7" y="382.4" font-size="10" text-anchor="middle" fill="#dcdcdc">0.4</text><line x1="722.9" y1="206.4" x2="726.9" y2="206.4" stroke="#8c8c8c" stroke-width="1"/><text x="721.9" y="210.20000000000002" font-size="10" text-anchor="end" fill="#dcdcdc">0.4</text><line x1="1003.5" y1="367.5" x2="1003.5" y2="371.5" stroke="#8c8c8c" stroke-width="1"/><text x="1003.0" y="382.4" font-size="10" text-anchor="middle" fill="#dcdcdc">0.5</text><line x1="722.9" y1="166.1" x2="726.9" y2="166.1" stroke="#8c8c8c" stroke-width="1"/><text x="721.9" y="169.9" font-size="10" text-anchor="end" fill="#dcdcdc">0.5</text><line x1="1058.9" y1="367.5" x2="1058.9" y2="371.5" stroke="#8c8c8c" stroke-width="1"/><text x="1058.4" y="382.4" font-size="10" text-anchor="middle" fill="#dcdcdc">0.6</text><line x1="722.9" y1="125.8" x2="726.9" y2="125.8" stroke="#8c8c8c" stroke-width="1"/><text x="721.9" y="129.6" font-size="10" text-anchor="end" fill="#dcdcdc">0.6</text><line x1="1114.2" y1="367.5" x2="1114.2" y2="371.5" stroke="#8c8c8c" stroke-width="1"/><text x="1113.7" y="382.4" font-size="10" text-anchor="middle" fill="#dcdcdc">0.7</text><line x1="722.9" y1="85.5" x2="726.9" y2="85.5" stroke="#8c8c8c" stroke-width="1"/><text x="721.9" y="89.3" font-size="10" text-anchor="end" fill="#dcdcdc">0.7</text><line x1="1169.5" y1="367.5" x2="1169.5" y2="371.5" stroke="#8c8c8c" stroke-width="1"/><text x="1169.0" y="382.4" font-size="10" text-anchor="middle" fill="#dcdcdc">0.8</text><line x1="722.9" y1="45.3" x2="726.9" y2="45.3" stroke="#8c8c8c" stroke-width="1"/><text x="721.9" y="49.099999999999994" font-size="10" text-anchor="end" fill="#dcdcdc">0.8</text><text x="721.4" y="372.5" font-size="10" text-anchor="end" fill="#dcdcdc">0</text><rect x="1098.2" y="233.6" width="9.8" height="8.8" fill="none" stroke="#fff" stroke-opacity="0.9" stroke-width="1.25"/><rect x="868.6" y="84.6" width="9.8" height="8.8" fill="none" stroke="#fff" stroke-opacity="0.9" stroke-width="1.25"/><rect x="805.0" y="338.3" width="9.8" height="8.8" fill="none" stroke="#fff" stroke-opacity="0.9" stroke-width="1.25"/><rect x="832.4" y="228.9" width="9.8" height="8.8" fill="none" stroke="#fff" stroke-opacity="0.9" stroke-width="1.25"/><rect x="908.0" y="301.6" width="9.8" height="8.8" fill="none" stroke="#fff" stroke-opacity="0.9" stroke-width="1.25"/><rect x="964.2" y="146.6" width="9.8" height="8.8" fill="none" stroke="#fff" stroke-opacity="0.9" stroke-width="1.25"/><rect x="894.8" y="230.1" width="10.2" height="8.6" fill="none" stroke="#111" stroke-opacity="1" stroke-width="1.3"/><ellipse cx="1103.3" cy="239.9" rx="2.8" ry="2.5" fill="#c81818" stroke="#000" stroke-opacity="0.35" stroke-width="0.9"/><ellipse cx="865.8" cy="82.3" rx="2.8" ry="2.5" fill="#38d838" stroke="#000" stroke-opacity="0.1" stroke-width="0.9"/><ellipse cx="808.0" cy="345.7" rx="2.8" ry="2.5" fill="#2020b8" stroke="#000" stroke-opacity="0.3" stroke-width="0.9"/><ellipse cx="832.2" cy="235.7" rx="2.8" ry="2.5" fill="#38d0d0" stroke="#000" stroke-opacity="0.45" stroke-width="0.9"/><ellipse cx="909.8" cy="309.6" rx="2.8" ry="2.5" fill="#d838c8" stroke="#000" stroke-opacity="0.3" stroke-width="0.9"/><ellipse cx="972.5" cy="152.6" rx="3.0999999999999996" ry="2.8" fill="#f0f020" stroke="#000" stroke-opacity="0.95" stroke-width="0.9"/><ellipse cx="895.6" cy="236.7" rx="3.1" ry="2.9" fill="#fff" stroke="#111" stroke-width="1.2"/><rect x="701.3" y="391.3" width="10.4" height="27.3" fill="#000"/><rect x="711.7" y="391.3" width="469.4" height="27.3" fill="url(#th)"/><g clip-path="url(#tc)"><rect x="701.5" y="418.5" width="10.3" height="23.5" fill="#262626"/><rect x="711.8" y="418.5" width="469.2" height="23.5" fill="#404040"/><rect x="701.5" y="442" width="10.3" height="23.5" fill="#363636"/><rect x="711.8" y="442" width="469.2" height="23.5" fill="#717171"/><rect x="701.5" y="465.5" width="10.3" height="22.5" fill="#262626"/><rect x="711.8" y="465.5" width="469.2" height="22.5" fill="#404040"/><rect x="701.5" y="488" width="10.3" height="22.5" fill="#363636"/><rect x="711.8" y="488" width="469.2" height="22.5" fill="#717171"/><rect x="701.5" y="510.5" width="10.3" height="23.0" fill="#262626"/><rect x="711.8" y="510.5" width="469.2" height="23.0" fill="#404040"/><g font-size="14" fill="#f4f4f4"><text x="772.3" y="411" textLength="29.9" lengthAdjust="spacingAndGlyphs">White</text><text x="833.1" y="411" textLength="21.4" lengthAdjust="spacingAndGlyphs">Red</text><text x="887.4" y="411" textLength="32.5" lengthAdjust="spacingAndGlyphs">Green</text><text x="949.1" y="411" textLength="23.4" lengthAdjust="spacingAndGlyphs">Blue</text><text x="1010.5" y="411" textLength="27.3" lengthAdjust="spacingAndGlyphs">Cyan</text><text x="1071.9" y="411" textLength="45.5" lengthAdjust="spacingAndGlyphs">Magenta</text><text x="1133" y="411" textLength="33.4" lengthAdjust="spacingAndGlyphs">Yellow</text></g><g font-size="16" fill="#f4f4f4"><text x="714.3" y="435.5" textLength="7.6" lengthAdjust="spacingAndGlyphs">X</text><text x="772.3" y="435.5" textLength="53.2" lengthAdjust="spacingAndGlyphs">151.5879</text><text x="833.1" y="435.5" textLength="46.1" lengthAdjust="spacingAndGlyphs">71.0759</text><text x="887.4" y="435.5" textLength="46.1" lengthAdjust="spacingAndGlyphs">40.5803</text><text x="949.1" y="435.5" textLength="46.1" lengthAdjust="spacingAndGlyphs">33.1242</text><text x="1010.5" y="435.5" textLength="46.1" lengthAdjust="spacingAndGlyphs">68.5162</text><text x="1071.9" y="435.5" textLength="53.2" lengthAdjust="spacingAndGlyphs">108.4363</text><text x="1133" y="435.5" textLength="51.3" lengthAdjust="spacingAndGlyphs">114.0112</text><text x="714.3" y="458.8" textLength="47" lengthAdjust="spacingAndGlyphs">Y cd/m²</text><text x="772.3" y="458.8" textLength="53.2" lengthAdjust="spacingAndGlyphs">160.3902</text><text x="833.1" y="458.8" textLength="46.1" lengthAdjust="spacingAndGlyphs">32.9966</text><text x="887.4" y="458.8" textLength="52.2" lengthAdjust="spacingAndGlyphs">114.2419</text><text x="949.1" y="458.8" textLength="46.1" lengthAdjust="spacingAndGlyphs">12.0237</text><text x="1010.5" y="458.8" textLength="52.2" lengthAdjust="spacingAndGlyphs">117.3485</text><text x="1071.9" y="458.8" textLength="46.1" lengthAdjust="spacingAndGlyphs">46.8500</text><text x="1133" y="458.8" textLength="53.2" lengthAdjust="spacingAndGlyphs">136.8232</text><text x="714.3" y="481.8" textLength="7.3" lengthAdjust="spacingAndGlyphs">Z</text><text x="772.3" y="481.8" textLength="53.2" lengthAdjust="spacingAndGlyphs">184.4137</text><text x="833.1" y="481.8" textLength="39.0" lengthAdjust="spacingAndGlyphs">0.4069</text><text x="887.4" y="481.8" textLength="39.0" lengthAdjust="spacingAndGlyphs">6.7619</text><text x="949.1" y="481.8" textLength="53.2" lengthAdjust="spacingAndGlyphs">180.7524</text><text x="1010.5" y="481.8" textLength="53.2" lengthAdjust="spacingAndGlyphs">174.0399</text><text x="1071.9" y="481.8" textLength="53.2" lengthAdjust="spacingAndGlyphs">172.7955</text><text x="1133" y="481.8" textLength="39.0" lengthAdjust="spacingAndGlyphs">6.0540</text><text x="714.3" y="504.7" textLength="45" lengthAdjust="spacingAndGlyphs">x: CIE31</text><text x="772.3" y="504.7" textLength="39.0" lengthAdjust="spacingAndGlyphs">0.3054</text><text x="833.1" y="504.7" textLength="39.0" lengthAdjust="spacingAndGlyphs">0.6803</text><text x="887.4" y="504.7" textLength="38.1" lengthAdjust="spacingAndGlyphs">0.2511</text><text x="949.1" y="504.7" textLength="39.0" lengthAdjust="spacingAndGlyphs">0.1466</text><text x="1010.5" y="504.7" textLength="39.0" lengthAdjust="spacingAndGlyphs">0.1904</text><text x="1071.9" y="504.7" textLength="39.0" lengthAdjust="spacingAndGlyphs">0.3305</text><text x="1133" y="504.7" textLength="39.0" lengthAdjust="spacingAndGlyphs">0.4438</text><text x="714.3" y="527.3" textLength="45" lengthAdjust="spacingAndGlyphs">y: CIE31</text><text x="772.3" y="527.3" textLength="39.0" lengthAdjust="spacingAndGlyphs">0.3231</text><text x="833.1" y="527.3" textLength="39.0" lengthAdjust="spacingAndGlyphs">0.3158</text><text x="887.4" y="527.3" textLength="39.0" lengthAdjust="spacingAndGlyphs">0.7070</text><text x="949.1" y="527.3" textLength="39.0" lengthAdjust="spacingAndGlyphs">0.0532</text><text x="1010.5" y="527.3" textLength="39.0" lengthAdjust="spacingAndGlyphs">0.3261</text><text x="1071.9" y="527.3" textLength="39.0" lengthAdjust="spacingAndGlyphs">0.1428</text><text x="1133" y="527.3" textLength="39.0" lengthAdjust="spacingAndGlyphs">0.5326</text></g></g><rect x="1181.1" y="418.6" width="12.8" height="110.6" fill="#474747"/><rect x="1183.6" y="434.3" width="9.2" height="37.6" rx="3.5" fill="#2d2d2d"/><rect x="1182.6" y="421.5" width="10.5" height="11.3" rx="2" fill="#8a8a8a"/><path d="M1184.6 429.800L1187.900 424.600L1191.200 429.800Z" fill="#2a2a2a"/><rect x="1182.6" y="515" width="10.5" height="11.6" rx="2" fill="#8a8a8a"/><path d="M1184.6 518.400L1187.900 523.600L1191.200 518.400Z" fill="#2a2a2a"/><rect x="711.7" y="529.2" width="469.4" height="9.8" fill="#5c5c5c"/><rect x="724.5" y="529.2" width="384.5" height="9.8" fill="#454545"/><rect x="712.3" y="529.6" width="12" height="9.4" fill="#8c8c8c"/><path d="M720.5 530.5L715.500 535.200L720.500 539.500Z" fill="#2a2a2a"/><rect x="1169.5" y="529.6" width="11.5" height="9.4" fill="#8c8c8c"/><path d="M1173 530.500L1178 535.200L1173 539.500Z" fill="#2a2a2a"/><rect x="1011" y="495.6" width="25" height="23.4" rx="2" fill="#f5870f"/><path d="M1017.3 495.800L1022.300 495.800L1029.600 508.500L1024.200 517.500L1020.800 517.500L1025 508.500Z" fill="#6e6e6e" stroke="#fff" stroke-opacity="0.75" stroke-width="0.8"/><text x="1040.5" y="515.8" font-size="24.5" fill="#2a2a2a" fill-opacity="0.82" textLength="138" lengthAdjust="spacingAndGlyphs">Soomal.com</text>
</svg>
</body></html>
